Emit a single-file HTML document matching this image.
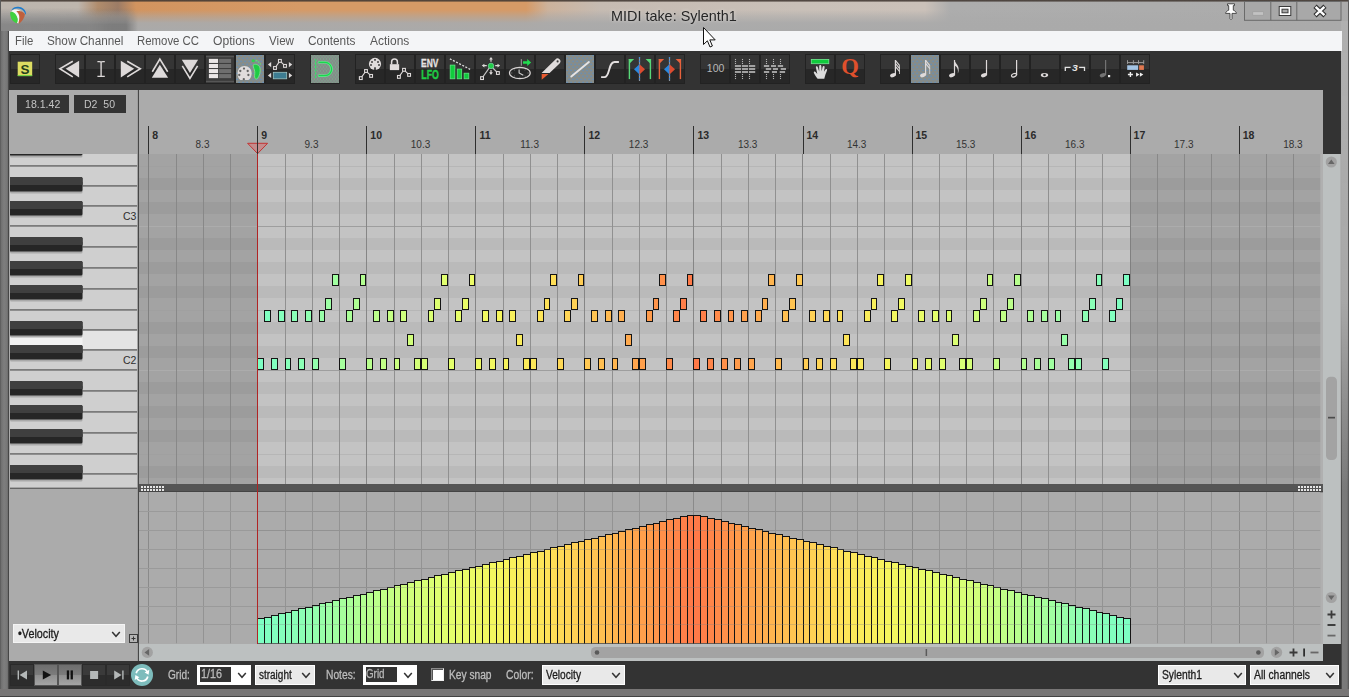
<!DOCTYPE html>
<html><head><meta charset="utf-8"><title>MIDI take: Sylenth1</title>
<style>
html,body{margin:0;padding:0;overflow:hidden;}
body{width:1349px;height:697px;overflow:hidden;background:#6f6f6f;font-family:"Liberation Sans",sans-serif;position:relative;}

.t{position:absolute;white-space:pre;transform-origin:0 0;line-height:1;}
.b{-webkit-text-stroke:.3px;}
#title{position:absolute;left:0;top:0;width:1349px;height:31px;background:
 linear-gradient(to bottom, rgba(66,56,50,.88) 0, rgba(66,56,50,.88) 1px, rgba(66,56,50,0) 2.2px),
 linear-gradient(to bottom, rgba(170,170,170,0) 0, rgba(170,170,170,0) 32%, rgba(170,170,170,.5) 52%, rgba(170,170,170,.95) 74%, rgba(170,170,170,1) 100%),
 linear-gradient(to right, #bcb5ae 0, #beb6ae 78px, #b08c6c 98px, #9c7c66 118px, #d2945f 136px, #d69a66 300px, #d69a66 526px, #ccb29c 548px, #c6bbb2 600px, #c9c0b8 800px, #cbc1b9 925px, #adadad 950px, #ababab 100%);}
#tl-dark{position:absolute;left:0;top:0;width:140px;height:31px;background:linear-gradient(to bottom, rgba(120,120,120,0) 0, rgba(120,120,120,0) 25%, rgba(122,122,122,.95) 80%);
 -webkit-mask-image:linear-gradient(to right,rgba(0,0,0,.75) 0,rgba(0,0,0,.8) 90px,#000 112px,#000 126px,transparent 138px);mask-image:linear-gradient(to right,rgba(0,0,0,.75) 0,rgba(0,0,0,.8) 90px,#000 112px,#000 126px,transparent 138px);}
#frameL{position:absolute;left:0;top:30.5px;width:9.2px;height:667px;background:linear-gradient(to right,#555 0,#707070 1.2px,#7e7e7e 4px,#767676 7.4px,#484848 8.2px,#444 9.2px);}
#frameR{position:absolute;left:1341px;top:20.5px;width:8px;height:676.5px;background:linear-gradient(to bottom,rgba(176,176,176,1) 0,rgba(170,170,170,.95) 280px,rgba(130,130,130,0) 470px),linear-gradient(to right,#4a4a4a 0,#4a4a4a .8px,#7a7a7a 1.4px,#787878 6.4px,#444 7px,#3c3c3c 8px);}
#frameR2{position:absolute;left:1347.6px;top:0;width:1.4px;height:697px;background:#5c5c5c;}
#titleL{position:absolute;left:0;top:0;width:1.3px;height:31px;background:#5a5a5a;}
#frameB{position:absolute;left:0;top:688.5px;width:1349px;height:8.5px;background:linear-gradient(to bottom,#787676 0,#787676 6.8px,#444 7.4px,#3c3c3c 8.5px);}
#menu{position:absolute;left:8.5px;top:30.5px;width:1333px;height:20.5px;background:#f4f5f7;}
#tb{position:absolute;left:9px;top:51px;width:1332px;height:39px;background:#333;}
.info{position:absolute;top:95px;width:52px;height:18px;background:#333;}
#bot{position:absolute;left:9px;top:661px;width:1332px;height:27.5px;background:#333;}
.combo{position:absolute;box-sizing:border-box;height:20.5px;top:664.5px;background:#e9e9e9;border:1px solid #fff;}
.sel{position:absolute;background:#333;}
.tbtn{position:absolute;top:664px;width:24px;height:22px;box-sizing:border-box;border:1px solid #2a2a2a;background:linear-gradient(to bottom,#3a3a3a 0,#3a3a3a 50%,#2c2c2c 50%);}
.tbtn.on{background:linear-gradient(to bottom,#6e6e6e 0,#7c7c7c 50%,#8e8e8e 50%,#a4a4a4 100%);border-color:#555;}

</style></head><body>

<svg width="1349" height="697" viewBox="0 0 1349 697" style="position:absolute;left:0;top:0" font-family="Liberation Sans, sans-serif">
<rect x="9" y="89.7" width="1332" height="571.3" fill="#ababab"/>
<clipPath id="gc"><rect x="139" y="154" width="1181.5" height="330"/></clipPath>
<g clip-path="url(#gc)">
<rect x="139" y="154" width="1181.5" height="330" fill="#a3a3a3"/>
<rect x="257" y="154" width="873" height="330" fill="#c3c3c3"/>
<rect x="139" y="466" width="1181.5" height="12" fill="#9c9c9c"/>
<rect x="257" y="466" width="873" height="12" fill="#bababa"/>
<rect x="139" y="454" width="1181.5" height="1" fill="#9e9e9e" opacity=".6"/>
<rect x="257" y="454" width="873" height="1" fill="#bcbcbc" opacity=".6"/>
<rect x="139" y="430" width="1181.5" height="12" fill="#9c9c9c"/>
<rect x="257" y="430" width="873" height="12" fill="#bababa"/>
<rect x="139" y="406" width="1181.5" height="12" fill="#9c9c9c"/>
<rect x="257" y="406" width="873" height="12" fill="#bababa"/>
<rect x="139" y="382" width="1181.5" height="12" fill="#9c9c9c"/>
<rect x="257" y="382" width="873" height="12" fill="#bababa"/>
<rect x="139" y="370" width="1181.5" height="1" fill="#acacac"/>
<rect x="257" y="370" width="873" height="1" fill="#9e9e9e"/>
<rect x="139" y="346" width="1181.5" height="12" fill="#9c9c9c"/>
<rect x="257" y="346" width="873" height="12" fill="#bababa"/>
<rect x="139" y="322" width="1181.5" height="12" fill="#9c9c9c"/>
<rect x="257" y="322" width="873" height="12" fill="#bababa"/>
<rect x="139" y="310" width="1181.5" height="1" fill="#9e9e9e" opacity=".6"/>
<rect x="257" y="310" width="873" height="1" fill="#bcbcbc" opacity=".6"/>
<rect x="139" y="286" width="1181.5" height="12" fill="#9c9c9c"/>
<rect x="257" y="286" width="873" height="12" fill="#bababa"/>
<rect x="139" y="262" width="1181.5" height="12" fill="#9c9c9c"/>
<rect x="257" y="262" width="873" height="12" fill="#bababa"/>
<rect x="139" y="238" width="1181.5" height="12" fill="#9c9c9c"/>
<rect x="257" y="238" width="873" height="12" fill="#bababa"/>
<rect x="139" y="226" width="1181.5" height="1" fill="#acacac"/>
<rect x="257" y="226" width="873" height="1" fill="#9e9e9e"/>
<rect x="139" y="202" width="1181.5" height="12" fill="#9c9c9c"/>
<rect x="257" y="202" width="873" height="12" fill="#bababa"/>
<rect x="139" y="178" width="1181.5" height="12" fill="#9c9c9c"/>
<rect x="257" y="178" width="873" height="12" fill="#bababa"/>
<rect x="139" y="166" width="1181.5" height="1" fill="#9e9e9e" opacity=".6"/>
<rect x="257" y="166" width="873" height="1" fill="#bcbcbc" opacity=".6"/>
<rect x="139" y="142" width="1181.5" height="12" fill="#9c9c9c"/>
<rect x="257" y="142" width="873" height="12" fill="#bababa"/>
<rect x="148" y="154" width="1" height="330" fill="#808080"/>
<rect x="176" y="154" width="1" height="330" fill="#888888"/>
<rect x="203" y="154" width="1" height="330" fill="#888888"/>
<rect x="230" y="154" width="1" height="330" fill="#888888"/>
<rect x="257" y="154" width="1" height="330" fill="#868686"/>
<rect x="285" y="154" width="1" height="330" fill="#909090"/>
<rect x="312" y="154" width="1" height="330" fill="#909090"/>
<rect x="339" y="154" width="1" height="330" fill="#909090"/>
<rect x="366" y="154" width="1" height="330" fill="#868686"/>
<rect x="394" y="154" width="1" height="330" fill="#909090"/>
<rect x="421" y="154" width="1" height="330" fill="#909090"/>
<rect x="448" y="154" width="1" height="330" fill="#909090"/>
<rect x="475" y="154" width="1" height="330" fill="#868686"/>
<rect x="503" y="154" width="1" height="330" fill="#909090"/>
<rect x="530" y="154" width="1" height="330" fill="#909090"/>
<rect x="557" y="154" width="1" height="330" fill="#909090"/>
<rect x="584" y="154" width="1" height="330" fill="#868686"/>
<rect x="612" y="154" width="1" height="330" fill="#909090"/>
<rect x="639" y="154" width="1" height="330" fill="#909090"/>
<rect x="666" y="154" width="1" height="330" fill="#909090"/>
<rect x="693" y="154" width="1" height="330" fill="#868686"/>
<rect x="721" y="154" width="1" height="330" fill="#909090"/>
<rect x="748" y="154" width="1" height="330" fill="#909090"/>
<rect x="775" y="154" width="1" height="330" fill="#909090"/>
<rect x="802" y="154" width="1" height="330" fill="#868686"/>
<rect x="830" y="154" width="1" height="330" fill="#909090"/>
<rect x="857" y="154" width="1" height="330" fill="#909090"/>
<rect x="884" y="154" width="1" height="330" fill="#909090"/>
<rect x="912" y="154" width="1" height="330" fill="#868686"/>
<rect x="939" y="154" width="1" height="330" fill="#909090"/>
<rect x="966" y="154" width="1" height="330" fill="#909090"/>
<rect x="993" y="154" width="1" height="330" fill="#909090"/>
<rect x="1021" y="154" width="1" height="330" fill="#868686"/>
<rect x="1048" y="154" width="1" height="330" fill="#909090"/>
<rect x="1075" y="154" width="1" height="330" fill="#909090"/>
<rect x="1102" y="154" width="1" height="330" fill="#909090"/>
<rect x="1130" y="154" width="1" height="330" fill="#808080"/>
<rect x="1157" y="154" width="1" height="330" fill="#888888"/>
<rect x="1184" y="154" width="1" height="330" fill="#888888"/>
<rect x="1211" y="154" width="1" height="330" fill="#888888"/>
<rect x="1239" y="154" width="1" height="330" fill="#808080"/>
<rect x="1266" y="154" width="1" height="330" fill="#888888"/>
<rect x="1293" y="154" width="1" height="330" fill="#888888"/>
</g>
<rect x="1320.5" y="154" width="2.5" height="490" fill="#b0b0b0"/>
<rect x="257.5" y="358.5" width="6" height="11" fill="#7dffc4" stroke="#141414" stroke-width="1"/>
<rect x="264.5" y="310.5" width="6" height="11" fill="#80ffc1" stroke="#141414" stroke-width="1"/>
<rect x="271.5" y="358.5" width="6" height="11" fill="#82ffbf" stroke="#141414" stroke-width="1"/>
<rect x="278.5" y="310.5" width="6" height="11" fill="#85ffbc" stroke="#141414" stroke-width="1"/>
<rect x="285.5" y="358.5" width="5" height="11" fill="#87ffba" stroke="#141414" stroke-width="1"/>
<rect x="291.5" y="310.5" width="6" height="11" fill="#8affb7" stroke="#141414" stroke-width="1"/>
<rect x="298.5" y="358.5" width="6" height="11" fill="#8cffb5" stroke="#141414" stroke-width="1"/>
<rect x="305.5" y="310.5" width="6" height="11" fill="#8fffb2" stroke="#141414" stroke-width="1"/>
<rect x="312.5" y="358.5" width="6" height="11" fill="#94ffae" stroke="#141414" stroke-width="1"/>
<rect x="319.5" y="310.5" width="5" height="11" fill="#98ffa9" stroke="#141414" stroke-width="1"/>
<rect x="325.5" y="298.5" width="6" height="11" fill="#9dffa5" stroke="#141414" stroke-width="1"/>
<rect x="332.5" y="274.5" width="6" height="11" fill="#a1ffa1" stroke="#141414" stroke-width="1"/>
<rect x="339.5" y="358.5" width="6" height="11" fill="#a6ff9d" stroke="#141414" stroke-width="1"/>
<rect x="346.5" y="310.5" width="6" height="11" fill="#aaff98" stroke="#141414" stroke-width="1"/>
<rect x="353.5" y="298.5" width="6" height="11" fill="#afff94" stroke="#141414" stroke-width="1"/>
<rect x="360.5" y="274.5" width="5" height="11" fill="#b3ff91" stroke="#141414" stroke-width="1"/>
<rect x="366.5" y="358.5" width="6" height="11" fill="#b8ff8e" stroke="#141414" stroke-width="1"/>
<rect x="373.5" y="310.5" width="6" height="11" fill="#bcff8b" stroke="#141414" stroke-width="1"/>
<rect x="380.5" y="358.5" width="6" height="11" fill="#c1ff87" stroke="#141414" stroke-width="1"/>
<rect x="387.5" y="310.5" width="6" height="11" fill="#c5ff84" stroke="#141414" stroke-width="1"/>
<rect x="394.5" y="358.5" width="5" height="11" fill="#caff81" stroke="#141414" stroke-width="1"/>
<rect x="400.5" y="310.5" width="6" height="11" fill="#ceff7e" stroke="#141414" stroke-width="1"/>
<rect x="407.5" y="334.5" width="6" height="11" fill="#d1ff7b" stroke="#141414" stroke-width="1"/>
<rect x="414.5" y="358.5" width="6" height="11" fill="#d4ff79" stroke="#141414" stroke-width="1"/>
<rect x="421.5" y="358.5" width="6" height="11" fill="#d7ff76" stroke="#141414" stroke-width="1"/>
<rect x="428.5" y="310.5" width="5" height="11" fill="#dbff74" stroke="#141414" stroke-width="1"/>
<rect x="434.5" y="298.5" width="6" height="11" fill="#deff71" stroke="#141414" stroke-width="1"/>
<rect x="441.5" y="274.5" width="6" height="11" fill="#e1ff6f" stroke="#141414" stroke-width="1"/>
<rect x="448.5" y="358.5" width="6" height="11" fill="#e4ff6c" stroke="#141414" stroke-width="1"/>
<rect x="455.5" y="310.5" width="6" height="11" fill="#e7fe6a" stroke="#141414" stroke-width="1"/>
<rect x="462.5" y="298.5" width="6" height="11" fill="#e9fc68" stroke="#141414" stroke-width="1"/>
<rect x="469.5" y="274.5" width="5" height="11" fill="#ecfb66" stroke="#141414" stroke-width="1"/>
<rect x="475.5" y="358.5" width="6" height="11" fill="#eefa64" stroke="#141414" stroke-width="1"/>
<rect x="482.5" y="310.5" width="6" height="11" fill="#f1f962" stroke="#141414" stroke-width="1"/>
<rect x="489.5" y="358.5" width="6" height="11" fill="#f3f760" stroke="#141414" stroke-width="1"/>
<rect x="496.5" y="310.5" width="6" height="11" fill="#f6f65e" stroke="#141414" stroke-width="1"/>
<rect x="503.5" y="358.5" width="5" height="11" fill="#f7f35d" stroke="#141414" stroke-width="1"/>
<rect x="509.5" y="310.5" width="6" height="11" fill="#f9f05c" stroke="#141414" stroke-width="1"/>
<rect x="516.5" y="334.5" width="6" height="11" fill="#faed5b" stroke="#141414" stroke-width="1"/>
<rect x="523.5" y="358.5" width="6" height="11" fill="#fbeb5b" stroke="#141414" stroke-width="1"/>
<rect x="530.5" y="358.5" width="6" height="11" fill="#fce85a" stroke="#141414" stroke-width="1"/>
<rect x="537.5" y="310.5" width="6" height="11" fill="#fee559" stroke="#141414" stroke-width="1"/>
<rect x="544.5" y="298.5" width="5" height="11" fill="#ffe258" stroke="#141414" stroke-width="1"/>
<rect x="550.5" y="274.5" width="6" height="11" fill="#ffde57" stroke="#141414" stroke-width="1"/>
<rect x="557.5" y="358.5" width="6" height="11" fill="#ffd956" stroke="#141414" stroke-width="1"/>
<rect x="564.5" y="310.5" width="6" height="11" fill="#ffd555" stroke="#141414" stroke-width="1"/>
<rect x="571.5" y="298.5" width="6" height="11" fill="#ffd155" stroke="#141414" stroke-width="1"/>
<rect x="578.5" y="274.5" width="5" height="11" fill="#ffcd54" stroke="#141414" stroke-width="1"/>
<rect x="584.5" y="358.5" width="6" height="11" fill="#ffc853" stroke="#141414" stroke-width="1"/>
<rect x="591.5" y="310.5" width="6" height="11" fill="#ffc452" stroke="#141414" stroke-width="1"/>
<rect x="598.5" y="358.5" width="6" height="11" fill="#ffbf51" stroke="#141414" stroke-width="1"/>
<rect x="605.5" y="310.5" width="6" height="11" fill="#ffba50" stroke="#141414" stroke-width="1"/>
<rect x="612.5" y="358.5" width="5" height="11" fill="#ffb54f" stroke="#141414" stroke-width="1"/>
<rect x="618.5" y="310.5" width="6" height="11" fill="#ffaf4f" stroke="#141414" stroke-width="1"/>
<rect x="625.5" y="334.5" width="6" height="11" fill="#ffaa4e" stroke="#141414" stroke-width="1"/>
<rect x="632.5" y="358.5" width="6" height="11" fill="#ffa54d" stroke="#141414" stroke-width="1"/>
<rect x="639.5" y="358.5" width="6" height="11" fill="#ffa04c" stroke="#141414" stroke-width="1"/>
<rect x="646.5" y="310.5" width="6" height="11" fill="#ff9b4b" stroke="#141414" stroke-width="1"/>
<rect x="653.5" y="298.5" width="5" height="11" fill="#ff954b" stroke="#141414" stroke-width="1"/>
<rect x="659.5" y="274.5" width="6" height="11" fill="#ff904a" stroke="#141414" stroke-width="1"/>
<rect x="666.5" y="358.5" width="6" height="11" fill="#ff8a4a" stroke="#141414" stroke-width="1"/>
<rect x="673.5" y="310.5" width="6" height="11" fill="#ff8549" stroke="#141414" stroke-width="1"/>
<rect x="680.5" y="298.5" width="6" height="11" fill="#ff7f49" stroke="#141414" stroke-width="1"/>
<rect x="687.5" y="274.5" width="5" height="11" fill="#ff7a48" stroke="#141414" stroke-width="1"/>
<rect x="693.5" y="358.5" width="6" height="11" fill="#ff7a48" stroke="#141414" stroke-width="1"/>
<rect x="700.5" y="310.5" width="6" height="11" fill="#ff7f49" stroke="#141414" stroke-width="1"/>
<rect x="707.5" y="358.5" width="6" height="11" fill="#ff8549" stroke="#141414" stroke-width="1"/>
<rect x="714.5" y="310.5" width="6" height="11" fill="#ff8a4a" stroke="#141414" stroke-width="1"/>
<rect x="721.5" y="358.5" width="6" height="11" fill="#ff904a" stroke="#141414" stroke-width="1"/>
<rect x="728.5" y="310.5" width="5" height="11" fill="#ff954b" stroke="#141414" stroke-width="1"/>
<rect x="734.5" y="358.5" width="6" height="11" fill="#ff9b4b" stroke="#141414" stroke-width="1"/>
<rect x="741.5" y="310.5" width="6" height="11" fill="#ffa04c" stroke="#141414" stroke-width="1"/>
<rect x="748.5" y="358.5" width="6" height="11" fill="#ffa54d" stroke="#141414" stroke-width="1"/>
<rect x="755.5" y="310.5" width="6" height="11" fill="#ffaa4e" stroke="#141414" stroke-width="1"/>
<rect x="762.5" y="298.5" width="5" height="11" fill="#ffaf4f" stroke="#141414" stroke-width="1"/>
<rect x="768.5" y="274.5" width="6" height="11" fill="#ffb54f" stroke="#141414" stroke-width="1"/>
<rect x="775.5" y="358.5" width="6" height="11" fill="#ffba50" stroke="#141414" stroke-width="1"/>
<rect x="782.5" y="310.5" width="6" height="11" fill="#ffbf51" stroke="#141414" stroke-width="1"/>
<rect x="789.5" y="298.5" width="6" height="11" fill="#ffc452" stroke="#141414" stroke-width="1"/>
<rect x="796.5" y="274.5" width="6" height="11" fill="#ffc853" stroke="#141414" stroke-width="1"/>
<rect x="803.5" y="358.5" width="5" height="11" fill="#ffcd54" stroke="#141414" stroke-width="1"/>
<rect x="809.5" y="310.5" width="6" height="11" fill="#ffd155" stroke="#141414" stroke-width="1"/>
<rect x="816.5" y="358.5" width="6" height="11" fill="#ffd555" stroke="#141414" stroke-width="1"/>
<rect x="823.5" y="310.5" width="6" height="11" fill="#ffd956" stroke="#141414" stroke-width="1"/>
<rect x="830.5" y="358.5" width="6" height="11" fill="#ffde57" stroke="#141414" stroke-width="1"/>
<rect x="837.5" y="310.5" width="5" height="11" fill="#ffe258" stroke="#141414" stroke-width="1"/>
<rect x="843.5" y="334.5" width="6" height="11" fill="#fee559" stroke="#141414" stroke-width="1"/>
<rect x="850.5" y="358.5" width="6" height="11" fill="#fce85a" stroke="#141414" stroke-width="1"/>
<rect x="857.5" y="358.5" width="6" height="11" fill="#fbeb5b" stroke="#141414" stroke-width="1"/>
<rect x="864.5" y="310.5" width="6" height="11" fill="#faed5b" stroke="#141414" stroke-width="1"/>
<rect x="871.5" y="298.5" width="5" height="11" fill="#f9f05c" stroke="#141414" stroke-width="1"/>
<rect x="877.5" y="274.5" width="6" height="11" fill="#f7f35d" stroke="#141414" stroke-width="1"/>
<rect x="884.5" y="358.5" width="6" height="11" fill="#f6f65e" stroke="#141414" stroke-width="1"/>
<rect x="891.5" y="310.5" width="6" height="11" fill="#f3f760" stroke="#141414" stroke-width="1"/>
<rect x="898.5" y="298.5" width="6" height="11" fill="#f1f962" stroke="#141414" stroke-width="1"/>
<rect x="905.5" y="274.5" width="6" height="11" fill="#eefa64" stroke="#141414" stroke-width="1"/>
<rect x="912.5" y="358.5" width="5" height="11" fill="#ecfb66" stroke="#141414" stroke-width="1"/>
<rect x="918.5" y="310.5" width="6" height="11" fill="#e9fc68" stroke="#141414" stroke-width="1"/>
<rect x="925.5" y="358.5" width="6" height="11" fill="#e7fe6a" stroke="#141414" stroke-width="1"/>
<rect x="932.5" y="310.5" width="6" height="11" fill="#e4ff6c" stroke="#141414" stroke-width="1"/>
<rect x="939.5" y="358.5" width="6" height="11" fill="#e1ff6f" stroke="#141414" stroke-width="1"/>
<rect x="946.5" y="310.5" width="5" height="11" fill="#deff71" stroke="#141414" stroke-width="1"/>
<rect x="952.5" y="334.5" width="6" height="11" fill="#dbff74" stroke="#141414" stroke-width="1"/>
<rect x="959.5" y="358.5" width="6" height="11" fill="#d7ff76" stroke="#141414" stroke-width="1"/>
<rect x="966.5" y="358.5" width="6" height="11" fill="#d4ff79" stroke="#141414" stroke-width="1"/>
<rect x="973.5" y="310.5" width="6" height="11" fill="#d1ff7b" stroke="#141414" stroke-width="1"/>
<rect x="980.5" y="298.5" width="6" height="11" fill="#ceff7e" stroke="#141414" stroke-width="1"/>
<rect x="987.5" y="274.5" width="5" height="11" fill="#caff81" stroke="#141414" stroke-width="1"/>
<rect x="993.5" y="358.5" width="6" height="11" fill="#c5ff84" stroke="#141414" stroke-width="1"/>
<rect x="1000.5" y="310.5" width="6" height="11" fill="#c1ff87" stroke="#141414" stroke-width="1"/>
<rect x="1007.5" y="298.5" width="6" height="11" fill="#bcff8b" stroke="#141414" stroke-width="1"/>
<rect x="1014.5" y="274.5" width="6" height="11" fill="#b8ff8e" stroke="#141414" stroke-width="1"/>
<rect x="1021.5" y="358.5" width="5" height="11" fill="#b3ff91" stroke="#141414" stroke-width="1"/>
<rect x="1027.5" y="310.5" width="6" height="11" fill="#afff94" stroke="#141414" stroke-width="1"/>
<rect x="1034.5" y="358.5" width="6" height="11" fill="#aaff98" stroke="#141414" stroke-width="1"/>
<rect x="1041.5" y="310.5" width="6" height="11" fill="#a6ff9d" stroke="#141414" stroke-width="1"/>
<rect x="1048.5" y="358.5" width="6" height="11" fill="#a1ffa1" stroke="#141414" stroke-width="1"/>
<rect x="1055.5" y="310.5" width="5" height="11" fill="#9dffa5" stroke="#141414" stroke-width="1"/>
<rect x="1061.5" y="334.5" width="6" height="11" fill="#98ffa9" stroke="#141414" stroke-width="1"/>
<rect x="1068.5" y="358.5" width="6" height="11" fill="#94ffae" stroke="#141414" stroke-width="1"/>
<rect x="1075.5" y="358.5" width="6" height="11" fill="#8fffb2" stroke="#141414" stroke-width="1"/>
<rect x="1082.5" y="310.5" width="6" height="11" fill="#8cffb5" stroke="#141414" stroke-width="1"/>
<rect x="1089.5" y="298.5" width="6" height="11" fill="#8affb7" stroke="#141414" stroke-width="1"/>
<rect x="1096.5" y="274.5" width="5" height="11" fill="#87ffba" stroke="#141414" stroke-width="1"/>
<rect x="1102.5" y="358.5" width="6" height="11" fill="#85ffbc" stroke="#141414" stroke-width="1"/>
<rect x="1109.5" y="310.5" width="6" height="11" fill="#82ffbf" stroke="#141414" stroke-width="1"/>
<rect x="1116.5" y="298.5" width="6" height="11" fill="#80ffc1" stroke="#141414" stroke-width="1"/>
<rect x="1123.5" y="274.5" width="6" height="11" fill="#7dffc4" stroke="#141414" stroke-width="1"/>
<rect x="139" y="484" width="1184" height="8" fill="#555555"/>
<rect x="139" y="491.3" width="1184" height="1" fill="#3e3e3e"/>
<rect x="141" y="486" width="2" height="2" fill="#e6e6e6"/>
<rect x="141" y="489" width="2" height="2" fill="#e6e6e6"/>
<rect x="144" y="486" width="2" height="2" fill="#e6e6e6"/>
<rect x="144" y="489" width="2" height="2" fill="#e6e6e6"/>
<rect x="147" y="486" width="2" height="2" fill="#e6e6e6"/>
<rect x="147" y="489" width="2" height="2" fill="#e6e6e6"/>
<rect x="150" y="486" width="2" height="2" fill="#e6e6e6"/>
<rect x="150" y="489" width="2" height="2" fill="#e6e6e6"/>
<rect x="153" y="486" width="2" height="2" fill="#e6e6e6"/>
<rect x="153" y="489" width="2" height="2" fill="#e6e6e6"/>
<rect x="156" y="486" width="2" height="2" fill="#e6e6e6"/>
<rect x="156" y="489" width="2" height="2" fill="#e6e6e6"/>
<rect x="159" y="486" width="2" height="2" fill="#e6e6e6"/>
<rect x="159" y="489" width="2" height="2" fill="#e6e6e6"/>
<rect x="162" y="486" width="2" height="2" fill="#e6e6e6"/>
<rect x="162" y="489" width="2" height="2" fill="#e6e6e6"/>
<rect x="1298" y="486" width="2" height="2" fill="#e6e6e6"/>
<rect x="1298" y="489" width="2" height="2" fill="#e6e6e6"/>
<rect x="1301" y="486" width="2" height="2" fill="#e6e6e6"/>
<rect x="1301" y="489" width="2" height="2" fill="#e6e6e6"/>
<rect x="1304" y="486" width="2" height="2" fill="#e6e6e6"/>
<rect x="1304" y="489" width="2" height="2" fill="#e6e6e6"/>
<rect x="1307" y="486" width="2" height="2" fill="#e6e6e6"/>
<rect x="1307" y="489" width="2" height="2" fill="#e6e6e6"/>
<rect x="1310" y="486" width="2" height="2" fill="#e6e6e6"/>
<rect x="1310" y="489" width="2" height="2" fill="#e6e6e6"/>
<rect x="1313" y="486" width="2" height="2" fill="#e6e6e6"/>
<rect x="1313" y="489" width="2" height="2" fill="#e6e6e6"/>
<rect x="1316" y="486" width="2" height="2" fill="#e6e6e6"/>
<rect x="1316" y="489" width="2" height="2" fill="#e6e6e6"/>
<rect x="1319" y="486" width="2" height="2" fill="#e6e6e6"/>
<rect x="1319" y="489" width="2" height="2" fill="#e6e6e6"/>
<clipPath id="vc"><rect x="139" y="492" width="1181.5" height="151.5"/></clipPath>
<g clip-path="url(#vc)">
<rect x="139" y="492" width="1181.5" height="151.5" fill="#ababab"/>
<rect x="148" y="492" width="1" height="151.5" fill="#8a8a8a"/>
<rect x="176" y="492" width="1" height="151.5" fill="#939393"/>
<rect x="203" y="492" width="1" height="151.5" fill="#939393"/>
<rect x="230" y="492" width="1" height="151.5" fill="#939393"/>
<rect x="257" y="492" width="1" height="151.5" fill="#8a8a8a"/>
<rect x="285" y="492" width="1" height="151.5" fill="#939393"/>
<rect x="312" y="492" width="1" height="151.5" fill="#939393"/>
<rect x="339" y="492" width="1" height="151.5" fill="#939393"/>
<rect x="366" y="492" width="1" height="151.5" fill="#8a8a8a"/>
<rect x="394" y="492" width="1" height="151.5" fill="#939393"/>
<rect x="421" y="492" width="1" height="151.5" fill="#939393"/>
<rect x="448" y="492" width="1" height="151.5" fill="#939393"/>
<rect x="475" y="492" width="1" height="151.5" fill="#8a8a8a"/>
<rect x="503" y="492" width="1" height="151.5" fill="#939393"/>
<rect x="530" y="492" width="1" height="151.5" fill="#939393"/>
<rect x="557" y="492" width="1" height="151.5" fill="#939393"/>
<rect x="584" y="492" width="1" height="151.5" fill="#8a8a8a"/>
<rect x="612" y="492" width="1" height="151.5" fill="#939393"/>
<rect x="639" y="492" width="1" height="151.5" fill="#939393"/>
<rect x="666" y="492" width="1" height="151.5" fill="#939393"/>
<rect x="693" y="492" width="1" height="151.5" fill="#8a8a8a"/>
<rect x="721" y="492" width="1" height="151.5" fill="#939393"/>
<rect x="748" y="492" width="1" height="151.5" fill="#939393"/>
<rect x="775" y="492" width="1" height="151.5" fill="#939393"/>
<rect x="802" y="492" width="1" height="151.5" fill="#8a8a8a"/>
<rect x="830" y="492" width="1" height="151.5" fill="#939393"/>
<rect x="857" y="492" width="1" height="151.5" fill="#939393"/>
<rect x="884" y="492" width="1" height="151.5" fill="#939393"/>
<rect x="912" y="492" width="1" height="151.5" fill="#8a8a8a"/>
<rect x="939" y="492" width="1" height="151.5" fill="#939393"/>
<rect x="966" y="492" width="1" height="151.5" fill="#939393"/>
<rect x="993" y="492" width="1" height="151.5" fill="#939393"/>
<rect x="1021" y="492" width="1" height="151.5" fill="#8a8a8a"/>
<rect x="1048" y="492" width="1" height="151.5" fill="#939393"/>
<rect x="1075" y="492" width="1" height="151.5" fill="#939393"/>
<rect x="1102" y="492" width="1" height="151.5" fill="#939393"/>
<rect x="1130" y="492" width="1" height="151.5" fill="#8a8a8a"/>
<rect x="1157" y="492" width="1" height="151.5" fill="#939393"/>
<rect x="1184" y="492" width="1" height="151.5" fill="#939393"/>
<rect x="1211" y="492" width="1" height="151.5" fill="#939393"/>
<rect x="1239" y="492" width="1" height="151.5" fill="#8a8a8a"/>
<rect x="1266" y="492" width="1" height="151.5" fill="#939393"/>
<rect x="1293" y="492" width="1" height="151.5" fill="#939393"/>
<rect x="139" y="624" width="1181.5" height="1" fill="#9a9a9a"/>
<rect x="139" y="606" width="1181.5" height="1" fill="#9a9a9a"/>
<rect x="139" y="587" width="1181.5" height="1" fill="#9a9a9a"/>
<rect x="139" y="568" width="1181.5" height="1" fill="#9a9a9a"/>
<rect x="139" y="549" width="1181.5" height="1" fill="#9a9a9a"/>
<rect x="139" y="530" width="1181.5" height="1" fill="#9a9a9a"/>
<rect x="139" y="511" width="1181.5" height="1" fill="#9a9a9a"/>
<rect x="257.5" y="618.5" width="7" height="25" fill="#7dffc4" stroke="#141414" stroke-width="1"/>
<rect x="264.5" y="617.5" width="7" height="26" fill="#80ffc1" stroke="#141414" stroke-width="1"/>
<rect x="271.5" y="615.5" width="7" height="28" fill="#82ffbf" stroke="#141414" stroke-width="1"/>
<rect x="278.5" y="613.5" width="7" height="30" fill="#85ffbc" stroke="#141414" stroke-width="1"/>
<rect x="285.5" y="612.5" width="6" height="31" fill="#87ffba" stroke="#141414" stroke-width="1"/>
<rect x="291.5" y="610.5" width="7" height="33" fill="#8affb7" stroke="#141414" stroke-width="1"/>
<rect x="298.5" y="608.5" width="7" height="35" fill="#8cffb5" stroke="#141414" stroke-width="1"/>
<rect x="305.5" y="607.5" width="7" height="36" fill="#8fffb2" stroke="#141414" stroke-width="1"/>
<rect x="312.5" y="605.5" width="7" height="38" fill="#94ffae" stroke="#141414" stroke-width="1"/>
<rect x="319.5" y="603.5" width="6" height="40" fill="#98ffa9" stroke="#141414" stroke-width="1"/>
<rect x="325.5" y="602.5" width="7" height="41" fill="#9dffa5" stroke="#141414" stroke-width="1"/>
<rect x="332.5" y="600.5" width="7" height="43" fill="#a1ffa1" stroke="#141414" stroke-width="1"/>
<rect x="339.5" y="598.5" width="7" height="45" fill="#a6ff9d" stroke="#141414" stroke-width="1"/>
<rect x="346.5" y="597.5" width="7" height="46" fill="#aaff98" stroke="#141414" stroke-width="1"/>
<rect x="353.5" y="595.5" width="7" height="48" fill="#afff94" stroke="#141414" stroke-width="1"/>
<rect x="360.5" y="594.5" width="6" height="49" fill="#b3ff91" stroke="#141414" stroke-width="1"/>
<rect x="366.5" y="592.5" width="7" height="51" fill="#b8ff8e" stroke="#141414" stroke-width="1"/>
<rect x="373.5" y="590.5" width="7" height="53" fill="#bcff8b" stroke="#141414" stroke-width="1"/>
<rect x="380.5" y="589.5" width="7" height="54" fill="#c1ff87" stroke="#141414" stroke-width="1"/>
<rect x="387.5" y="587.5" width="7" height="56" fill="#c5ff84" stroke="#141414" stroke-width="1"/>
<rect x="394.5" y="585.5" width="6" height="58" fill="#caff81" stroke="#141414" stroke-width="1"/>
<rect x="400.5" y="584.5" width="7" height="59" fill="#ceff7e" stroke="#141414" stroke-width="1"/>
<rect x="407.5" y="582.5" width="7" height="61" fill="#d1ff7b" stroke="#141414" stroke-width="1"/>
<rect x="414.5" y="580.5" width="7" height="63" fill="#d4ff79" stroke="#141414" stroke-width="1"/>
<rect x="421.5" y="579.5" width="7" height="64" fill="#d7ff76" stroke="#141414" stroke-width="1"/>
<rect x="428.5" y="577.5" width="6" height="66" fill="#dbff74" stroke="#141414" stroke-width="1"/>
<rect x="434.5" y="575.5" width="7" height="68" fill="#deff71" stroke="#141414" stroke-width="1"/>
<rect x="441.5" y="574.5" width="7" height="69" fill="#e1ff6f" stroke="#141414" stroke-width="1"/>
<rect x="448.5" y="572.5" width="7" height="71" fill="#e4ff6c" stroke="#141414" stroke-width="1"/>
<rect x="455.5" y="570.5" width="7" height="73" fill="#e7fe6a" stroke="#141414" stroke-width="1"/>
<rect x="462.5" y="569.5" width="7" height="74" fill="#e9fc68" stroke="#141414" stroke-width="1"/>
<rect x="469.5" y="567.5" width="6" height="76" fill="#ecfb66" stroke="#141414" stroke-width="1"/>
<rect x="475.5" y="566.5" width="7" height="77" fill="#eefa64" stroke="#141414" stroke-width="1"/>
<rect x="482.5" y="564.5" width="7" height="79" fill="#f1f962" stroke="#141414" stroke-width="1"/>
<rect x="489.5" y="562.5" width="7" height="81" fill="#f3f760" stroke="#141414" stroke-width="1"/>
<rect x="496.5" y="561.5" width="7" height="82" fill="#f6f65e" stroke="#141414" stroke-width="1"/>
<rect x="503.5" y="559.5" width="6" height="84" fill="#f7f35d" stroke="#141414" stroke-width="1"/>
<rect x="509.5" y="557.5" width="7" height="86" fill="#f9f05c" stroke="#141414" stroke-width="1"/>
<rect x="516.5" y="556.5" width="7" height="87" fill="#faed5b" stroke="#141414" stroke-width="1"/>
<rect x="523.5" y="554.5" width="7" height="89" fill="#fbeb5b" stroke="#141414" stroke-width="1"/>
<rect x="530.5" y="552.5" width="7" height="91" fill="#fce85a" stroke="#141414" stroke-width="1"/>
<rect x="537.5" y="551.5" width="7" height="92" fill="#fee559" stroke="#141414" stroke-width="1"/>
<rect x="544.5" y="549.5" width="6" height="94" fill="#ffe258" stroke="#141414" stroke-width="1"/>
<rect x="550.5" y="547.5" width="7" height="96" fill="#ffde57" stroke="#141414" stroke-width="1"/>
<rect x="557.5" y="546.5" width="7" height="97" fill="#ffd956" stroke="#141414" stroke-width="1"/>
<rect x="564.5" y="544.5" width="7" height="99" fill="#ffd555" stroke="#141414" stroke-width="1"/>
<rect x="571.5" y="542.5" width="7" height="101" fill="#ffd155" stroke="#141414" stroke-width="1"/>
<rect x="578.5" y="541.5" width="6" height="102" fill="#ffcd54" stroke="#141414" stroke-width="1"/>
<rect x="584.5" y="539.5" width="7" height="104" fill="#ffc853" stroke="#141414" stroke-width="1"/>
<rect x="591.5" y="538.5" width="7" height="105" fill="#ffc452" stroke="#141414" stroke-width="1"/>
<rect x="598.5" y="536.5" width="7" height="107" fill="#ffbf51" stroke="#141414" stroke-width="1"/>
<rect x="605.5" y="534.5" width="7" height="109" fill="#ffba50" stroke="#141414" stroke-width="1"/>
<rect x="612.5" y="533.5" width="6" height="110" fill="#ffb54f" stroke="#141414" stroke-width="1"/>
<rect x="618.5" y="531.5" width="7" height="112" fill="#ffaf4f" stroke="#141414" stroke-width="1"/>
<rect x="625.5" y="529.5" width="7" height="114" fill="#ffaa4e" stroke="#141414" stroke-width="1"/>
<rect x="632.5" y="528.5" width="7" height="115" fill="#ffa54d" stroke="#141414" stroke-width="1"/>
<rect x="639.5" y="526.5" width="7" height="117" fill="#ffa04c" stroke="#141414" stroke-width="1"/>
<rect x="646.5" y="524.5" width="7" height="119" fill="#ff9b4b" stroke="#141414" stroke-width="1"/>
<rect x="653.5" y="523.5" width="6" height="120" fill="#ff954b" stroke="#141414" stroke-width="1"/>
<rect x="659.5" y="521.5" width="7" height="122" fill="#ff904a" stroke="#141414" stroke-width="1"/>
<rect x="666.5" y="519.5" width="7" height="124" fill="#ff8a4a" stroke="#141414" stroke-width="1"/>
<rect x="673.5" y="518.5" width="7" height="125" fill="#ff8549" stroke="#141414" stroke-width="1"/>
<rect x="680.5" y="516.5" width="7" height="127" fill="#ff7f49" stroke="#141414" stroke-width="1"/>
<rect x="687.5" y="515.5" width="6" height="128" fill="#ff7a48" stroke="#141414" stroke-width="1"/>
<rect x="693.5" y="515.5" width="7" height="128" fill="#ff7a48" stroke="#141414" stroke-width="1"/>
<rect x="700.5" y="516.5" width="7" height="127" fill="#ff7f49" stroke="#141414" stroke-width="1"/>
<rect x="707.5" y="518.5" width="7" height="125" fill="#ff8549" stroke="#141414" stroke-width="1"/>
<rect x="714.5" y="519.5" width="7" height="124" fill="#ff8a4a" stroke="#141414" stroke-width="1"/>
<rect x="721.5" y="521.5" width="7" height="122" fill="#ff904a" stroke="#141414" stroke-width="1"/>
<rect x="728.5" y="523.5" width="6" height="120" fill="#ff954b" stroke="#141414" stroke-width="1"/>
<rect x="734.5" y="524.5" width="7" height="119" fill="#ff9b4b" stroke="#141414" stroke-width="1"/>
<rect x="741.5" y="526.5" width="7" height="117" fill="#ffa04c" stroke="#141414" stroke-width="1"/>
<rect x="748.5" y="528.5" width="7" height="115" fill="#ffa54d" stroke="#141414" stroke-width="1"/>
<rect x="755.5" y="529.5" width="7" height="114" fill="#ffaa4e" stroke="#141414" stroke-width="1"/>
<rect x="762.5" y="531.5" width="6" height="112" fill="#ffaf4f" stroke="#141414" stroke-width="1"/>
<rect x="768.5" y="533.5" width="7" height="110" fill="#ffb54f" stroke="#141414" stroke-width="1"/>
<rect x="775.5" y="534.5" width="7" height="109" fill="#ffba50" stroke="#141414" stroke-width="1"/>
<rect x="782.5" y="536.5" width="7" height="107" fill="#ffbf51" stroke="#141414" stroke-width="1"/>
<rect x="789.5" y="538.5" width="7" height="105" fill="#ffc452" stroke="#141414" stroke-width="1"/>
<rect x="796.5" y="539.5" width="7" height="104" fill="#ffc853" stroke="#141414" stroke-width="1"/>
<rect x="803.5" y="541.5" width="6" height="102" fill="#ffcd54" stroke="#141414" stroke-width="1"/>
<rect x="809.5" y="542.5" width="7" height="101" fill="#ffd155" stroke="#141414" stroke-width="1"/>
<rect x="816.5" y="544.5" width="7" height="99" fill="#ffd555" stroke="#141414" stroke-width="1"/>
<rect x="823.5" y="546.5" width="7" height="97" fill="#ffd956" stroke="#141414" stroke-width="1"/>
<rect x="830.5" y="547.5" width="7" height="96" fill="#ffde57" stroke="#141414" stroke-width="1"/>
<rect x="837.5" y="549.5" width="6" height="94" fill="#ffe258" stroke="#141414" stroke-width="1"/>
<rect x="843.5" y="551.5" width="7" height="92" fill="#fee559" stroke="#141414" stroke-width="1"/>
<rect x="850.5" y="552.5" width="7" height="91" fill="#fce85a" stroke="#141414" stroke-width="1"/>
<rect x="857.5" y="554.5" width="7" height="89" fill="#fbeb5b" stroke="#141414" stroke-width="1"/>
<rect x="864.5" y="556.5" width="7" height="87" fill="#faed5b" stroke="#141414" stroke-width="1"/>
<rect x="871.5" y="557.5" width="6" height="86" fill="#f9f05c" stroke="#141414" stroke-width="1"/>
<rect x="877.5" y="559.5" width="7" height="84" fill="#f7f35d" stroke="#141414" stroke-width="1"/>
<rect x="884.5" y="561.5" width="7" height="82" fill="#f6f65e" stroke="#141414" stroke-width="1"/>
<rect x="891.5" y="562.5" width="7" height="81" fill="#f3f760" stroke="#141414" stroke-width="1"/>
<rect x="898.5" y="564.5" width="7" height="79" fill="#f1f962" stroke="#141414" stroke-width="1"/>
<rect x="905.5" y="566.5" width="7" height="77" fill="#eefa64" stroke="#141414" stroke-width="1"/>
<rect x="912.5" y="567.5" width="6" height="76" fill="#ecfb66" stroke="#141414" stroke-width="1"/>
<rect x="918.5" y="569.5" width="7" height="74" fill="#e9fc68" stroke="#141414" stroke-width="1"/>
<rect x="925.5" y="570.5" width="7" height="73" fill="#e7fe6a" stroke="#141414" stroke-width="1"/>
<rect x="932.5" y="572.5" width="7" height="71" fill="#e4ff6c" stroke="#141414" stroke-width="1"/>
<rect x="939.5" y="574.5" width="7" height="69" fill="#e1ff6f" stroke="#141414" stroke-width="1"/>
<rect x="946.5" y="575.5" width="6" height="68" fill="#deff71" stroke="#141414" stroke-width="1"/>
<rect x="952.5" y="577.5" width="7" height="66" fill="#dbff74" stroke="#141414" stroke-width="1"/>
<rect x="959.5" y="579.5" width="7" height="64" fill="#d7ff76" stroke="#141414" stroke-width="1"/>
<rect x="966.5" y="580.5" width="7" height="63" fill="#d4ff79" stroke="#141414" stroke-width="1"/>
<rect x="973.5" y="582.5" width="7" height="61" fill="#d1ff7b" stroke="#141414" stroke-width="1"/>
<rect x="980.5" y="584.5" width="7" height="59" fill="#ceff7e" stroke="#141414" stroke-width="1"/>
<rect x="987.5" y="585.5" width="6" height="58" fill="#caff81" stroke="#141414" stroke-width="1"/>
<rect x="993.5" y="587.5" width="7" height="56" fill="#c5ff84" stroke="#141414" stroke-width="1"/>
<rect x="1000.5" y="589.5" width="7" height="54" fill="#c1ff87" stroke="#141414" stroke-width="1"/>
<rect x="1007.5" y="590.5" width="7" height="53" fill="#bcff8b" stroke="#141414" stroke-width="1"/>
<rect x="1014.5" y="592.5" width="7" height="51" fill="#b8ff8e" stroke="#141414" stroke-width="1"/>
<rect x="1021.5" y="594.5" width="6" height="49" fill="#b3ff91" stroke="#141414" stroke-width="1"/>
<rect x="1027.5" y="595.5" width="7" height="48" fill="#afff94" stroke="#141414" stroke-width="1"/>
<rect x="1034.5" y="597.5" width="7" height="46" fill="#aaff98" stroke="#141414" stroke-width="1"/>
<rect x="1041.5" y="598.5" width="7" height="45" fill="#a6ff9d" stroke="#141414" stroke-width="1"/>
<rect x="1048.5" y="600.5" width="7" height="43" fill="#a1ffa1" stroke="#141414" stroke-width="1"/>
<rect x="1055.5" y="602.5" width="6" height="41" fill="#9dffa5" stroke="#141414" stroke-width="1"/>
<rect x="1061.5" y="603.5" width="7" height="40" fill="#98ffa9" stroke="#141414" stroke-width="1"/>
<rect x="1068.5" y="605.5" width="7" height="38" fill="#94ffae" stroke="#141414" stroke-width="1"/>
<rect x="1075.5" y="607.5" width="7" height="36" fill="#8fffb2" stroke="#141414" stroke-width="1"/>
<rect x="1082.5" y="608.5" width="7" height="35" fill="#8cffb5" stroke="#141414" stroke-width="1"/>
<rect x="1089.5" y="610.5" width="7" height="33" fill="#8affb7" stroke="#141414" stroke-width="1"/>
<rect x="1096.5" y="612.5" width="6" height="31" fill="#87ffba" stroke="#141414" stroke-width="1"/>
<rect x="1102.5" y="613.5" width="7" height="30" fill="#85ffbc" stroke="#141414" stroke-width="1"/>
<rect x="1109.5" y="615.5" width="7" height="28" fill="#82ffbf" stroke="#141414" stroke-width="1"/>
<rect x="1116.5" y="617.5" width="7" height="26" fill="#80ffc1" stroke="#141414" stroke-width="1"/>
<rect x="1123.5" y="618.5" width="7" height="25" fill="#7dffc4" stroke="#141414" stroke-width="1"/>
<rect x="257" y="624" width="873" height="1" fill="#808080" opacity=".3"/>
<rect x="257" y="606" width="873" height="1" fill="#808080" opacity=".3"/>
<rect x="257" y="587" width="873" height="1" fill="#808080" opacity=".3"/>
<rect x="257" y="568" width="873" height="1" fill="#808080" opacity=".3"/>
<rect x="257" y="549" width="873" height="1" fill="#808080" opacity=".3"/>
<rect x="257" y="530" width="873" height="1" fill="#808080" opacity=".3"/>
<rect x="257" y="511" width="873" height="1" fill="#808080" opacity=".3"/>
</g>
<rect x="257" y="154" width="1" height="490" fill="#b02424"/>
<path d="M247.6 143.3 L267.6 143.3 L257.6 153.6 Z" fill="#c48c8c" stroke="#c23434" stroke-width="1"/>
<rect x="148" y="126" width="1" height="28" fill="#2e2e2e"/>
<text x="152.3" y="139" font-size="10.5" font-weight="bold" fill="#2a2a2a">8</text>
<text x="202.5" y="148" font-size="10" fill="#333" text-anchor="middle">8.3</text>
<rect x="257" y="126" width="1" height="28" fill="#2e2e2e"/>
<text x="261.3" y="139" font-size="10.5" font-weight="bold" fill="#2a2a2a">9</text>
<text x="311.5" y="148" font-size="10" fill="#333" text-anchor="middle">9.3</text>
<rect x="366" y="126" width="1" height="28" fill="#2e2e2e"/>
<text x="370.3" y="139" font-size="10.5" font-weight="bold" fill="#2a2a2a">10</text>
<text x="420.5" y="148" font-size="10" fill="#333" text-anchor="middle">10.3</text>
<rect x="475" y="126" width="1" height="28" fill="#2e2e2e"/>
<text x="479.4" y="139" font-size="10.5" font-weight="bold" fill="#2a2a2a">11</text>
<text x="529.6" y="148" font-size="10" fill="#333" text-anchor="middle">11.3</text>
<rect x="584" y="126" width="1" height="28" fill="#2e2e2e"/>
<text x="588.4" y="139" font-size="10.5" font-weight="bold" fill="#2a2a2a">12</text>
<text x="638.6" y="148" font-size="10" fill="#333" text-anchor="middle">12.3</text>
<rect x="693" y="126" width="1" height="28" fill="#2e2e2e"/>
<text x="697.5" y="139" font-size="10.5" font-weight="bold" fill="#2a2a2a">13</text>
<text x="747.7" y="148" font-size="10" fill="#333" text-anchor="middle">13.3</text>
<rect x="803" y="126" width="1" height="28" fill="#2e2e2e"/>
<text x="806.5" y="139" font-size="10.5" font-weight="bold" fill="#2a2a2a">14</text>
<text x="856.7" y="148" font-size="10" fill="#333" text-anchor="middle">14.3</text>
<rect x="912" y="126" width="1" height="28" fill="#2e2e2e"/>
<text x="915.5" y="139" font-size="10.5" font-weight="bold" fill="#2a2a2a">15</text>
<text x="965.7" y="148" font-size="10" fill="#333" text-anchor="middle">15.3</text>
<rect x="1021" y="126" width="1" height="28" fill="#2e2e2e"/>
<text x="1024.6" y="139" font-size="10.5" font-weight="bold" fill="#2a2a2a">16</text>
<text x="1074.8" y="148" font-size="10" fill="#333" text-anchor="middle">16.3</text>
<rect x="1130" y="126" width="1" height="28" fill="#2e2e2e"/>
<text x="1133.6" y="139" font-size="10.5" font-weight="bold" fill="#2a2a2a">17</text>
<text x="1183.8" y="148" font-size="10" fill="#333" text-anchor="middle">17.3</text>
<rect x="1239" y="126" width="1" height="28" fill="#2e2e2e"/>
<text x="1242.7" y="139" font-size="10.5" font-weight="bold" fill="#2a2a2a">18</text>
<text x="1292.9" y="148" font-size="10" fill="#333" text-anchor="middle">18.3</text>
<rect x="1323" y="89" width="18" height="65" fill="#333"/>
<clipPath id="pc"><rect x="10" y="154" width="127.5" height="335"/></clipPath>
<g clip-path="url(#pc)">
<rect x="10" y="154" width="127.5" height="334" fill="#cfcfcf"/>
<rect x="10" y="330.7" width="128" height="19" fill="#e4e4e4"/>
<rect x="10" y="335" width="72.5" height="10" fill="#f2f2f2"/>
<rect x="10" y="81.1" width="127.5" height="1.6" fill="#727272"/>
<rect x="82" y="61.1" width="55.5" height="1.6" fill="#727272"/>
<rect x="82" y="41.1" width="55.5" height="1.6" fill="#727272"/>
<rect x="10" y="21.1" width="127.5" height="1.6" fill="#727272"/>
<rect x="82" y="0.1" width="55.5" height="1.6" fill="#727272"/>
<rect x="82" y="-20.9" width="55.5" height="1.6" fill="#727272"/>
<rect x="82" y="-41.9" width="55.5" height="1.6" fill="#727272"/>
<rect x="10" y="57" width="72.5" height="16.5" rx="1.5" fill="#a9a9a9"/>
<rect x="9" y="57" width="73.5" height="14.4" rx="1.5" fill="#262626"/>
<rect x="9" y="57" width="73.5" height="8" rx="1.5" fill="#3f3f3f"/>
<rect x="9" y="62" width="73.5" height="3" fill="#3f3f3f"/>
<rect x="10" y="33" width="72.5" height="16.5" rx="1.5" fill="#a9a9a9"/>
<rect x="9" y="33" width="73.5" height="14.4" rx="1.5" fill="#262626"/>
<rect x="9" y="33" width="73.5" height="8" rx="1.5" fill="#3f3f3f"/>
<rect x="9" y="38" width="73.5" height="3" fill="#3f3f3f"/>
<rect x="10" y="-3" width="72.5" height="16.5" rx="1.5" fill="#a9a9a9"/>
<rect x="9" y="-3" width="73.5" height="14.4" rx="1.5" fill="#262626"/>
<rect x="9" y="-3" width="73.5" height="8" rx="1.5" fill="#3f3f3f"/>
<rect x="9" y="2" width="73.5" height="3" fill="#3f3f3f"/>
<rect x="10" y="-27" width="72.5" height="16.5" rx="1.5" fill="#a9a9a9"/>
<rect x="9" y="-27" width="73.5" height="14.4" rx="1.5" fill="#262626"/>
<rect x="9" y="-27" width="73.5" height="8" rx="1.5" fill="#3f3f3f"/>
<rect x="9" y="-22" width="73.5" height="3" fill="#3f3f3f"/>
<rect x="10" y="-51" width="72.5" height="16.5" rx="1.5" fill="#a9a9a9"/>
<rect x="9" y="-51" width="73.5" height="14.4" rx="1.5" fill="#262626"/>
<rect x="9" y="-51" width="73.5" height="8" rx="1.5" fill="#3f3f3f"/>
<rect x="9" y="-46" width="73.5" height="3" fill="#3f3f3f"/>
<rect x="10" y="225.1" width="127.5" height="1.6" fill="#727272"/>
<rect x="82" y="205.1" width="55.5" height="1.6" fill="#727272"/>
<rect x="82" y="185.1" width="55.5" height="1.6" fill="#727272"/>
<rect x="10" y="165.1" width="127.5" height="1.6" fill="#727272"/>
<rect x="82" y="144.1" width="55.5" height="1.6" fill="#727272"/>
<rect x="82" y="123.1" width="55.5" height="1.6" fill="#727272"/>
<rect x="82" y="102.1" width="55.5" height="1.6" fill="#727272"/>
<rect x="10" y="201" width="72.5" height="16.5" rx="1.5" fill="#a9a9a9"/>
<rect x="9" y="201" width="73.5" height="14.4" rx="1.5" fill="#262626"/>
<rect x="9" y="201" width="73.5" height="8" rx="1.5" fill="#3f3f3f"/>
<rect x="9" y="206" width="73.5" height="3" fill="#3f3f3f"/>
<rect x="10" y="177" width="72.5" height="16.5" rx="1.5" fill="#a9a9a9"/>
<rect x="9" y="177" width="73.5" height="14.4" rx="1.5" fill="#262626"/>
<rect x="9" y="177" width="73.5" height="8" rx="1.5" fill="#3f3f3f"/>
<rect x="9" y="182" width="73.5" height="3" fill="#3f3f3f"/>
<rect x="10" y="141" width="72.5" height="16.5" rx="1.5" fill="#a9a9a9"/>
<rect x="9" y="141" width="73.5" height="14.4" rx="1.5" fill="#262626"/>
<rect x="9" y="141" width="73.5" height="8" rx="1.5" fill="#3f3f3f"/>
<rect x="9" y="146" width="73.5" height="3" fill="#3f3f3f"/>
<rect x="10" y="117" width="72.5" height="16.5" rx="1.5" fill="#a9a9a9"/>
<rect x="9" y="117" width="73.5" height="14.4" rx="1.5" fill="#262626"/>
<rect x="9" y="117" width="73.5" height="8" rx="1.5" fill="#3f3f3f"/>
<rect x="9" y="122" width="73.5" height="3" fill="#3f3f3f"/>
<rect x="10" y="93" width="72.5" height="16.5" rx="1.5" fill="#a9a9a9"/>
<rect x="9" y="93" width="73.5" height="14.4" rx="1.5" fill="#262626"/>
<rect x="9" y="93" width="73.5" height="8" rx="1.5" fill="#3f3f3f"/>
<rect x="9" y="98" width="73.5" height="3" fill="#3f3f3f"/>
<rect x="10" y="369.1" width="127.5" height="1.6" fill="#727272"/>
<rect x="82" y="349.1" width="55.5" height="1.6" fill="#727272"/>
<rect x="82" y="329.1" width="55.5" height="1.6" fill="#727272"/>
<rect x="10" y="309.1" width="127.5" height="1.6" fill="#727272"/>
<rect x="82" y="288.1" width="55.5" height="1.6" fill="#727272"/>
<rect x="82" y="267.1" width="55.5" height="1.6" fill="#727272"/>
<rect x="82" y="246.1" width="55.5" height="1.6" fill="#727272"/>
<rect x="10" y="345" width="72.5" height="16.5" rx="1.5" fill="#a9a9a9"/>
<rect x="9" y="345" width="73.5" height="14.4" rx="1.5" fill="#262626"/>
<rect x="9" y="345" width="73.5" height="8" rx="1.5" fill="#3f3f3f"/>
<rect x="9" y="350" width="73.5" height="3" fill="#3f3f3f"/>
<rect x="10" y="321" width="72.5" height="16.5" rx="1.5" fill="#a9a9a9"/>
<rect x="9" y="321" width="73.5" height="14.4" rx="1.5" fill="#262626"/>
<rect x="9" y="321" width="73.5" height="8" rx="1.5" fill="#3f3f3f"/>
<rect x="9" y="326" width="73.5" height="3" fill="#3f3f3f"/>
<rect x="10" y="285" width="72.5" height="16.5" rx="1.5" fill="#a9a9a9"/>
<rect x="9" y="285" width="73.5" height="14.4" rx="1.5" fill="#262626"/>
<rect x="9" y="285" width="73.5" height="8" rx="1.5" fill="#3f3f3f"/>
<rect x="9" y="290" width="73.5" height="3" fill="#3f3f3f"/>
<rect x="10" y="261" width="72.5" height="16.5" rx="1.5" fill="#a9a9a9"/>
<rect x="9" y="261" width="73.5" height="14.4" rx="1.5" fill="#262626"/>
<rect x="9" y="261" width="73.5" height="8" rx="1.5" fill="#3f3f3f"/>
<rect x="9" y="266" width="73.5" height="3" fill="#3f3f3f"/>
<rect x="10" y="237" width="72.5" height="16.5" rx="1.5" fill="#a9a9a9"/>
<rect x="9" y="237" width="73.5" height="14.4" rx="1.5" fill="#262626"/>
<rect x="9" y="237" width="73.5" height="8" rx="1.5" fill="#3f3f3f"/>
<rect x="9" y="242" width="73.5" height="3" fill="#3f3f3f"/>
<rect x="10" y="513.1" width="127.5" height="1.6" fill="#727272"/>
<rect x="82" y="493.1" width="55.5" height="1.6" fill="#727272"/>
<rect x="82" y="473.1" width="55.5" height="1.6" fill="#727272"/>
<rect x="10" y="453.1" width="127.5" height="1.6" fill="#727272"/>
<rect x="82" y="432.1" width="55.5" height="1.6" fill="#727272"/>
<rect x="82" y="411.1" width="55.5" height="1.6" fill="#727272"/>
<rect x="82" y="390.1" width="55.5" height="1.6" fill="#727272"/>
<rect x="10" y="489" width="72.5" height="16.5" rx="1.5" fill="#a9a9a9"/>
<rect x="9" y="489" width="73.5" height="14.4" rx="1.5" fill="#262626"/>
<rect x="9" y="489" width="73.5" height="8" rx="1.5" fill="#3f3f3f"/>
<rect x="9" y="494" width="73.5" height="3" fill="#3f3f3f"/>
<rect x="10" y="465" width="72.5" height="16.5" rx="1.5" fill="#a9a9a9"/>
<rect x="9" y="465" width="73.5" height="14.4" rx="1.5" fill="#262626"/>
<rect x="9" y="465" width="73.5" height="8" rx="1.5" fill="#3f3f3f"/>
<rect x="9" y="470" width="73.5" height="3" fill="#3f3f3f"/>
<rect x="10" y="429" width="72.5" height="16.5" rx="1.5" fill="#a9a9a9"/>
<rect x="9" y="429" width="73.5" height="14.4" rx="1.5" fill="#262626"/>
<rect x="9" y="429" width="73.5" height="8" rx="1.5" fill="#3f3f3f"/>
<rect x="9" y="434" width="73.5" height="3" fill="#3f3f3f"/>
<rect x="10" y="405" width="72.5" height="16.5" rx="1.5" fill="#a9a9a9"/>
<rect x="9" y="405" width="73.5" height="14.4" rx="1.5" fill="#262626"/>
<rect x="9" y="405" width="73.5" height="8" rx="1.5" fill="#3f3f3f"/>
<rect x="9" y="410" width="73.5" height="3" fill="#3f3f3f"/>
<rect x="10" y="381" width="72.5" height="16.5" rx="1.5" fill="#a9a9a9"/>
<rect x="9" y="381" width="73.5" height="14.4" rx="1.5" fill="#262626"/>
<rect x="9" y="381" width="73.5" height="8" rx="1.5" fill="#3f3f3f"/>
<rect x="9" y="386" width="73.5" height="3" fill="#3f3f3f"/>
</g>
<rect x="10" y="487.6" width="128" height="1.4" fill="#666"/>
<text x="123" y="220.3" font-size="10.5" fill="#2e2e2e">C3</text>
<text x="123" y="364.3" font-size="10.5" fill="#2e2e2e">C2</text>
<rect x="137.3" y="89" width=".8" height="572" fill="#999"/><rect x="138" y="89" width="1" height="572" fill="#474747"/>
</svg>
<div id="title"></div><div id="tl-dark"></div>
<span class="t" style="left:611px;top:8.6px;font-size:14.6px;color:#262626;font-weight:normal;transform:scaleX(0.9870);text-shadow:0 0 4px rgba(255,255,255,.6);">MIDI take: Sylenth1</span>
<div id="frameL"></div><div id="frameR"></div><div id="frameR2"></div><div id="titleL"></div><div id="frameB"></div>
<div id="menu"></div>
<span class="t" style="left:15px;top:35.3px;font-size:12px;color:#585858;font-weight:normal;transform:scaleX(0.9460);">File</span>
<span class="t" style="left:46.9px;top:35.3px;font-size:12px;color:#585858;font-weight:normal;transform:scaleX(0.9787);">Show Channel</span>
<span class="t" style="left:136.9px;top:35.3px;font-size:12px;color:#585858;font-weight:normal;transform:scaleX(0.9501);">Remove CC</span>
<span class="t" style="left:213.3px;top:35.3px;font-size:12px;color:#585858;font-weight:normal;transform:scaleX(1.0082);">Options</span>
<span class="t" style="left:269px;top:35.3px;font-size:12px;color:#585858;font-weight:normal;transform:scaleX(0.9691);">View</span>
<span class="t" style="left:308.3px;top:35.3px;font-size:12px;color:#585858;font-weight:normal;transform:scaleX(0.9869);">Contents</span>
<span class="t" style="left:370px;top:35.3px;font-size:12px;color:#585858;font-weight:normal;transform:scaleX(0.9985);">Actions</span>
<div id="tb"></div>
<div class="info" style="left:17px"></div><div class="info" style="left:74px"></div>
<span class="t" style="left:24.7px;top:99px;font-size:11px;color:#c4c4c4;font-weight:normal;transform:scaleX(0.9618);">18.1.42</span>
<span class="t" style="left:83.7px;top:99px;font-size:11px;color:#c4c4c4;font-weight:normal;transform:scaleX(0.9561);">D2  50</span>
<div id="bot"></div>
<div class="tbtn" style="left:10px"></div>
<div class="tbtn on" style="left:34px"></div>
<div class="tbtn on" style="left:58px"></div>
<div class="tbtn" style="left:82px"></div>
<div class="tbtn" style="left:106px"></div>
<span class="t b" style="left:167.8px;top:669px;font-size:12px;color:#bdbdbd;font-weight:normal;transform:scaleX(0.8380);">Grid:</span>
<div class="combo" style="left:197.4px;width:53.4px;background:#fff"></div><div class="sel" style="left:200px;top:667px;width:31.2px;height:15px"></div>
<span class="t b" style="left:201.2px;top:668.3px;font-size:12px;color:#b8b8b8;font-weight:normal;transform:scaleX(0.8990);">1/16</span>
<svg class="t" style="left:236.5px;top:672px" width="10" height="7" viewBox="0 0 10 7"><path d="M1.2 1 L5 5.3 L8.8 1" fill="none" stroke="#333" stroke-width="1.5"/></svg>
<div class="combo" style="left:255.2px;width:59.4px"></div>
<span class="t b" style="left:259px;top:669px;font-size:12px;color:#1c1c1c;font-weight:normal;transform:scaleX(0.8308);">straight</span>
<svg class="t" style="left:300.5px;top:672px" width="10" height="7" viewBox="0 0 10 7"><path d="M1.2 1 L5 5.3 L8.8 1" fill="none" stroke="#333" stroke-width="1.5"/></svg>
<span class="t b" style="left:325.7px;top:669px;font-size:12px;color:#bdbdbd;font-weight:normal;transform:scaleX(0.8533);">Notes:</span>
<div class="combo" style="left:363px;width:53.9px;background:#fff"></div><div class="sel" style="left:365.7px;top:667px;width:31.1px;height:15px"></div>
<span class="t b" style="left:366.4px;top:668.3px;font-size:12px;color:#b8b8b8;font-weight:normal;transform:scaleX(0.8160);">Grid</span>
<svg class="t" style="left:402.5px;top:672px" width="10" height="7" viewBox="0 0 10 7"><path d="M1.2 1 L5 5.3 L8.8 1" fill="none" stroke="#333" stroke-width="1.5"/></svg>
<div style="position:absolute;left:431px;top:668px;width:13px;height:13px;background:#fff;border:1px solid #8a8a8a;border-right-color:#f0f0f0;border-bottom-color:#f0f0f0;box-shadow:inset 1px 1px 0 #555;box-sizing:border-box"></div>
<span class="t b" style="left:449px;top:669px;font-size:12px;color:#bdbdbd;font-weight:normal;transform:scaleX(0.8492);">Key snap</span>
<span class="t b" style="left:506px;top:669px;font-size:12px;color:#bdbdbd;font-weight:normal;transform:scaleX(0.8590);">Color:</span>
<div class="combo" style="left:541.5px;width:83px"></div>
<span class="t b" style="left:545.5px;top:669px;font-size:12px;color:#1c1c1c;font-weight:normal;transform:scaleX(0.8462);">Velocity</span>
<svg class="t" style="left:610.5px;top:672px" width="10" height="7" viewBox="0 0 10 7"><path d="M1.2 1 L5 5.3 L8.8 1" fill="none" stroke="#333" stroke-width="1.5"/></svg>
<div class="combo" style="left:1157.5px;width:88.5px"></div>
<span class="t b" style="left:1161.5px;top:669px;font-size:12px;color:#1c1c1c;font-weight:normal;transform:scaleX(0.8565);">Sylenth1</span>
<svg class="t" style="left:1232.5px;top:672px" width="10" height="7" viewBox="0 0 10 7"><path d="M1.2 1 L5 5.3 L8.8 1" fill="none" stroke="#333" stroke-width="1.5"/></svg>
<div class="combo" style="left:1250px;width:88.5px"></div>
<span class="t b" style="left:1254px;top:669px;font-size:12px;color:#1c1c1c;font-weight:normal;transform:scaleX(0.8653);">All channels</span>
<svg class="t" style="left:1324.5px;top:672px" width="10" height="7" viewBox="0 0 10 7"><path d="M1.2 1 L5 5.3 L8.8 1" fill="none" stroke="#333" stroke-width="1.5"/></svg>
<div class="combo" style="left:13px;top:624px;width:112px;height:19px;border-color:#f4f4f4;"></div>
<span class="t b" style="left:17.5px;top:627.7px;font-size:12px;color:#1c1c1c;font-weight:normal;transform:scaleX(0.8999);">•Velocity</span>
<svg class="t" style="left:110.5px;top:630.5px" width="10" height="7" viewBox="0 0 10 7"><path d="M1.2 1 L5 5.3 L8.8 1" fill="none" stroke="#333" stroke-width="1.5"/></svg>
<svg class="t" style="left:128.5px;top:634px" width="9" height="9" viewBox="0 0 9 9"><rect x=".5" y=".5" width="8" height="8" fill="#b4b4b4" stroke="#3c3c3c"/><path d="M2.5 4.5H6.5M4.5 2.5V6.5" stroke="#333" stroke-width="1"/></svg>
<svg width="1349" height="697" viewBox="0 0 1349 697" style="position:absolute;left:0;top:0;pointer-events:none">
<rect x="1323" y="154" width="17.3" height="490" fill="#bcc0c0"/>
<rect x="1326" y="376.7" width="11" height="83.3" rx="4.5" fill="#a3a3a3"/>
<rect x="1328" y="416.8" width="7" height="1.7" fill="#4c4c4c"/>
<circle cx="1331.3" cy="162" r="5.6" fill="#a2a2a2"/><path d="M1331.3 159.4 l3.3 4.6 h-6.6z" fill="#666"/>
<circle cx="1331.3" cy="597.5" r="5.6" fill="#a2a2a2"/><path d="M1331.3 600.1 l3.3 -4.6 h-6.6z" fill="#666"/>
<path d="M1327.5 614.5h8M1331.5 610.5v8" stroke="#3a3a3a" stroke-width="1.8"/>
<rect x="1327.5" y="624.2" width="8" height="1.6" fill="#1e1e1e"/>
<rect x="1327.5" y="634.7" width="8" height="1.8" fill="#686868"/>
<rect x="139" y="644" width="1184" height="17" fill="#bcc0c0"/>
<rect x="1323" y="644" width="18" height="17" fill="#333"/>
<circle cx="147.3" cy="652.4" r="5.6" fill="#a2a2a2"/><path d="M144.5 652.4 l4.6 -3.3 v6.6z" fill="#666"/>
<circle cx="1276.6" cy="652.4" r="5.6" fill="#a2a2a2"/><path d="M1279.4 652.4 l-4.6 -3.3 v6.6z" fill="#666"/>
<rect x="591" y="647" width="673" height="11" rx="4.5" fill="#a3a3a3"/>
<circle cx="597" cy="652.5" r="2.3" fill="#5a5a5a"/><circle cx="1258.4" cy="652.5" r="2.3" fill="#5a5a5a"/>
<rect x="925.6" y="649" width="1.5" height="7" fill="#5a5a5a"/>
<path d="M1289.5 652.5h8M1293.5 648.5v8" stroke="#3a3a3a" stroke-width="1.8"/>
<rect x="1303.3" y="648.5" width="1.6" height="8" fill="#1e1e1e"/>
<rect x="1310.5" y="651.6" width="8" height="1.8" fill="#686868"/>
<rect x="17.6" y="670.5" width="1.4" height="9" fill="#b4b8b8"/><path d="M19.6 675 L27 670.4 V679.6Z" fill="#b4b8b8"/>
<path d="M42.8 670.4 L51.2 674.9 L42.8 679.4Z" fill="#111"/>
<rect x="66.8" y="670.4" width="2.3" height="9" fill="#111"/><rect x="70.6" y="670.4" width="2.3" height="9" fill="#111"/>
<rect x="90.1" y="671" width="8" height="8" fill="#b4b8b8"/>
<path d="M121.6 675 L114.2 670.4 V679.6Z" fill="#b4b8b8"/><rect x="122.2" y="670.5" width="1.4" height="9" fill="#b4b8b8"/>
<circle cx="142" cy="674.9" r="11" fill="#7dbcbc"/>
<path d="M136.2 673.3 A6 6 0 0 1 147.5 672.3" fill="none" stroke="#fff" stroke-width="1.7"/><path d="M149.3 669.8 L148.6 674.8 L144.6 672.6Z" fill="#fff"/>
<path d="M147.8 676.5 A6 6 0 0 1 136.5 677.5" fill="none" stroke="#fff" stroke-width="1.7"/><path d="M134.7 680 L135.4 675 L139.4 677.2Z" fill="#fff"/>
</svg>
<svg width="1349" height="697" viewBox="0 0 1349 697" style="position:absolute;left:0;top:0" font-family="Liberation Sans, sans-serif">
<defs><pattern id="dots" width="4" height="6" patternUnits="userSpaceOnUse"><rect x="0.6" y="0.8" width="1" height="1" fill="#4590e2" opacity=".95"/><rect x="2.6" y="3.8" width="1" height="1" fill="#4590e2" opacity=".95"/></pattern><pattern id="gdots" width="3" height="4" patternUnits="userSpaceOnUse"><rect x="0.5" y="0.5" width="1" height="1" fill="#6ad08a" opacity=".7"/><rect x="2" y="2.5" width="1" height="1" fill="#6ad08a" opacity=".7"/></pattern></defs>
<rect x="10" y="54" width="30" height="30" fill="#222222"/><rect x="11" y="55" width="28" height="14" fill="#353535"/><rect x="11" y="69" width="28" height="14" fill="#272727"/>
<g transform="translate(10,54)"><rect x="7.7" y="7.7" width="14.5" height="14.4" fill="#dcdc62"/><rect x="7.7" y="21" width="14.5" height="1.1" fill="#58d040" opacity=".8"/><text x="14.95" y="19.6" font-size="13.5" font-weight="bold" fill="#25401c" text-anchor="middle">S</text></g>
<rect x="55" y="54" width="30" height="30" fill="#222222"/><rect x="56" y="55" width="28" height="14" fill="#353535"/><rect x="56" y="69" width="28" height="14" fill="#272727"/>
<rect x="85" y="54" width="30" height="30" fill="#222222"/><rect x="86" y="55" width="28" height="14" fill="#353535"/><rect x="86" y="69" width="28" height="14" fill="#272727"/>
<rect x="115" y="54" width="30" height="30" fill="#222222"/><rect x="116" y="55" width="28" height="14" fill="#353535"/><rect x="116" y="69" width="28" height="14" fill="#272727"/>
<rect x="145" y="54" width="30" height="30" fill="#222222"/><rect x="146" y="55" width="28" height="14" fill="#353535"/><rect x="146" y="69" width="28" height="14" fill="#272727"/>
<rect x="175" y="54" width="30" height="30" fill="#222222"/><rect x="176" y="55" width="28" height="14" fill="#353535"/><rect x="176" y="69" width="28" height="14" fill="#272727"/>
<rect x="205" y="54" width="30" height="30" fill="#222222"/><rect x="206" y="55" width="28" height="28" fill="#3a3a3a"/><rect x="206" y="56" width="28" height="1.3" fill="#565656"/><rect x="206" y="80.8" width="28" height="1.3" fill="#565656"/>
<rect x="235" y="54" width="30" height="30" fill="#222222"/><rect x="236" y="55" width="28" height="28" fill="#868c8a"/><rect x="236" y="55" width="28" height="28" fill="url(#dots)"/>
<rect x="265" y="54" width="30" height="30" fill="#222222"/><rect x="266" y="55" width="28" height="14" fill="#353535"/><rect x="266" y="69" width="28" height="14" fill="#272727"/>
<g transform="translate(55,54)"><path d="M17.8 7.3 L4.9 14.8 L17.8 22.9" fill="none" stroke="#dedada" stroke-width="1.6"/><path d="M10.7 14.8 L24.1 6.8 V23.4Z" fill="#dedada"/></g>
<g transform="translate(85,54)"><path d="M16.1 7.4V22.6 M12.4 7.6 C14.2 7.6 15.4 7.3 16.1 8 C16.8 7.3 18 7.6 19.8 7.6 M12.4 22.4 C14.2 22.4 15.4 22.7 16.1 22 C16.8 22.7 18 22.4 19.8 22.4" fill="none" stroke="#dedada" stroke-width="1.35"/></g>
<g transform="translate(115,54)"><path d="M12.2 7.3 L25.3 14.8 L12.2 22.9" fill="none" stroke="#dedada" stroke-width="1.6"/><path d="M19.2 14.8 L5.8 6.8 V23.4Z" fill="#dedada"/></g>
<g transform="translate(145,54)"><path d="M7.3 17.75 L14.85 5.1 L22.7 17.75" fill="none" stroke="#dedada" stroke-width="1.6"/><path d="M14.85 10.7 L6.8 23.85 H23.1Z" fill="#dedada"/></g>
<g transform="translate(175,54)"><path d="M7.3 11.9 L14.95 24.5 L22.6 11.9" fill="none" stroke="#dedada" stroke-width="1.6"/><path d="M14.95 18.9 L6.8 5.8 H23.1Z" fill="#dedada"/></g>
<g transform="translate(205,54)"><rect x="3.9" y="4.85" width="9.2" height="4.1" fill="#ebe7e7"/><rect x="14.1" y="4.85" width="12" height="4.1" fill="#6e6e6e"/><rect x="3.9" y="9.95" width="9.2" height="4.1" fill="#ebe7e7"/><rect x="14.1" y="9.95" width="12" height="4.1" fill="#6e6e6e"/><rect x="3.9" y="15.05" width="9.2" height="4.1" fill="#ebe7e7"/><rect x="14.1" y="15.05" width="12" height="4.1" fill="#6e6e6e"/><rect x="3.9" y="20.05" width="9.2" height="4.1" fill="#ebe7e7"/><rect x="14.1" y="20.05" width="12" height="4.1" fill="#6e6e6e"/></g>
<g transform="translate(235,54)"><path d="M9.5 12 C13.5 12 16.6 15 16.6 19.2 C16.6 22.5 15 25.6 13.2 26 L5.4 26 C3.6 24.8 2.6 22.4 2.6 19.4 C2.6 15 5.5 12 9.5 12Z" fill="#e0dcdc"/><circle cx="9" cy="14.6" r="1.15" fill="#646464"/><circle cx="5.3" cy="17" r="1.15" fill="#646464"/><circle cx="12.7" cy="17" r="1.15" fill="#646464"/><circle cx="4.3" cy="21" r="1.15" fill="#646464"/><circle cx="13.4" cy="21" r="1.15" fill="#646464"/><circle cx="8.8" cy="25.2" r="1.15" fill="#646464"/><path d="M18.6 10.6 C21 9.6 24.4 11 25 14 C25.6 17.5 24.6 22 22.6 24.4 C21.4 25.6 19.8 25 19.6 23 C19.4 20.5 20.3 18.6 19.4 16 C18.8 14.2 17.6 11.4 18.6 10.6Z" fill="#1fcb45" stroke="#7ee08e" stroke-width=".9"/><ellipse cx="18.3" cy="6.8" rx="1.7" ry="1.5" fill="#2fd050"/><circle cx="21.6" cy="6.6" r="0.9" fill="#5fe070"/><circle cx="23.6" cy="8" r="0.85" fill="#5fe070"/><circle cx="25.3" cy="10" r="0.8" fill="#5fe070"/></g>
<g transform="translate(265,54)"><path d="M2.9 10.6 L6.2 8 V13.2Z" fill="#dedada"/><path d="M27.2 10.6 L23.9 8 V13.2Z" fill="#dedada"/><path d="M2.9 21.4 L6.2 18.8 V24Z" fill="#dedada"/><path d="M27.2 21.4 L23.9 18.8 V24Z" fill="#dedada"/><path d="M10 14 L14.9 6.9 L20 11.9" fill="none" stroke="#dedada" stroke-width="1.1"/><rect x="8.6" y="12.6" width="2.8" height="2.8" fill="#222" stroke="#dedada" stroke-width="1.1"/><rect x="13.5" y="5.5" width="2.8" height="2.8" fill="#222" stroke="#dedada" stroke-width="1.1"/><rect x="18.6" y="10.5" width="2.8" height="2.8" fill="#222" stroke="#dedada" stroke-width="1.1"/><rect x="8.3" y="18.3" width="13.4" height="6.5" fill="#3d7d92" stroke="#9cc4c4" stroke-width=".8"/></g>
<rect x="310" y="54" width="30" height="30" fill="#222222"/><rect x="311" y="55" width="28" height="28" fill="#868c8a"/><rect x="311" y="55" width="28" height="28" fill="url(#gdots)"/>
<g transform="translate(310,54)"><path d="M5.6 5.2V24.6" stroke="#34e468" stroke-width="1.2" stroke-dasharray="2.2 1.1"/><path d="M8.3 8.4 H15 A6.65 6.65 0 0 1 15 21.7 H8.3" fill="none" stroke="#6aec94" stroke-width="2.4"/><path d="M8.6 8.4 H15 A6.65 6.65 0 0 1 15 21.7 H8.6" fill="none" stroke="#18d84c" stroke-width="1.2"/></g>
<rect x="355" y="54" width="30" height="30" fill="#222222"/><rect x="356" y="55" width="28" height="14" fill="#353535"/><rect x="356" y="69" width="28" height="14" fill="#272727"/>
<rect x="385" y="54" width="30" height="30" fill="#222222"/><rect x="386" y="55" width="28" height="14" fill="#353535"/><rect x="386" y="69" width="28" height="14" fill="#272727"/>
<rect x="415" y="54" width="30" height="30" fill="#222222"/><rect x="416" y="55" width="28" height="14" fill="#353535"/><rect x="416" y="69" width="28" height="14" fill="#272727"/>
<rect x="445" y="54" width="30" height="30" fill="#222222"/><rect x="446" y="55" width="28" height="14" fill="#353535"/><rect x="446" y="69" width="28" height="14" fill="#272727"/>
<rect x="475" y="54" width="30" height="30" fill="#222222"/><rect x="476" y="55" width="28" height="14" fill="#353535"/><rect x="476" y="69" width="28" height="14" fill="#272727"/>
<rect x="505" y="54" width="30" height="30" fill="#222222"/><rect x="506" y="55" width="28" height="14" fill="#353535"/><rect x="506" y="69" width="28" height="14" fill="#272727"/>
<rect x="535" y="54" width="30" height="30" fill="#222222"/><rect x="536" y="55" width="28" height="14" fill="#353535"/><rect x="536" y="69" width="28" height="14" fill="#272727"/>
<rect x="595" y="54" width="30" height="30" fill="#222222"/><rect x="596" y="55" width="28" height="14" fill="#353535"/><rect x="596" y="69" width="28" height="14" fill="#272727"/>
<rect x="625" y="54" width="30" height="30" fill="#222222"/><rect x="626" y="55" width="28" height="14" fill="#353535"/><rect x="626" y="69" width="28" height="14" fill="#272727"/>
<rect x="655" y="54" width="30" height="30" fill="#222222"/><rect x="656" y="55" width="28" height="14" fill="#353535"/><rect x="656" y="69" width="28" height="14" fill="#272727"/>
<rect x="565" y="54" width="30" height="30" fill="#222222"/><rect x="566" y="55" width="28" height="28" fill="#868c8a"/><rect x="566" y="55" width="28" height="28" fill="url(#dots)"/>
<g transform="translate(355,54)"><circle cx="20" cy="9.95" r="6.1" fill="#e0dcdc"/><rect x="19.25" y="5.15" width="1.5" height="1.5" fill="#111"/><rect x="16.25" y="7.25" width="1.5" height="1.5" fill="#111"/><rect x="22.25" y="7.25" width="1.5" height="1.5" fill="#111"/><rect x="15.25" y="10.25" width="1.5" height="1.5" fill="#111"/><rect x="23.25" y="10.25" width="1.5" height="1.5" fill="#111"/><rect x="19.25" y="13.3" width="1.5" height="3" fill="#222"/><path d="M5.8 24.1 L11 17 L16.1 21.9" fill="none" stroke="#dedada" stroke-width="1.1"/><rect x="4.4" y="22.7" width="2.8" height="2.8" fill="#222" stroke="#dedada" stroke-width="1.1"/><rect x="9.6" y="15.6" width="2.8" height="2.8" fill="#222" stroke="#dedada" stroke-width="1.1"/><rect x="14.7" y="20.5" width="2.8" height="2.8" fill="#222" stroke="#dedada" stroke-width="1.1"/></g>
<g transform="translate(385,54)"><rect x="4.85" y="10.2" width="9.3" height="5.9" fill="#e0dcdc"/><path d="M6.6 10.4 V8 A2.9 2.9 0 0 1 12.4 8 V10.4" fill="none" stroke="#e0dcdc" stroke-width="1.5"/><path d="M13.9 22.9 L19 15.8 L24.1 20.9" fill="none" stroke="#dedada" stroke-width="1.1"/><rect x="12.5" y="21.5" width="2.8" height="2.8" fill="#222" stroke="#dedada" stroke-width="1.1"/><rect x="17.6" y="14.4" width="2.8" height="2.8" fill="#222" stroke="#dedada" stroke-width="1.1"/><rect x="22.7" y="19.5" width="2.8" height="2.8" fill="#222" stroke="#dedada" stroke-width="1.1"/></g>
<g transform="translate(415,54)"><text x="6.1" y="12.6" font-size="11.6" font-weight="bold" fill="#e6e2e2" stroke="#e6e2e2" stroke-width=".3" textLength="17.3" lengthAdjust="spacingAndGlyphs">ENV</text><text x="6.3" y="25.3" font-size="11.9" font-weight="bold" fill="#1fcc44" stroke="#1fcc44" stroke-width=".4" textLength="17.6" lengthAdjust="spacingAndGlyphs">LFO</text></g>
<g transform="translate(445,54)"><path d="M4.85 4.8 L25.1 15.3" stroke="#dcdcdc" stroke-width="1.3" stroke-dasharray="2 1.5"/><rect x="5.2" y="11.1" width="4.7" height="13.7" fill="#10cc3c" stroke="#62e884" stroke-width=".8"/><rect x="12.2" y="15.1" width="4.5" height="9.7" fill="#10cc3c" stroke="#62e884" stroke-width=".8"/><rect x="19.1" y="19.2" width="4.7" height="5.6" fill="#10cc3c" stroke="#62e884" stroke-width=".8"/></g>
<g transform="translate(475,54)"><path d="M14.6 13.4 L7.05 24.1 M17.8 14 L22.9 19" stroke="#c4c4c4" stroke-width="1.1"/><path d="M16 7.8V4.5M16 16V19.3M11.8 11.6H8.6M20.2 11.6H23.4" stroke="#dedada" stroke-width="1.2"/><path d="M16 2.9l1.9 2.6h-3.8zM16 20.9l1.9 -2.6h-3.8zM6.8 11.6l2.6 -1.9v3.8zM25.1 11.6l-2.6 -1.9v3.8z" fill="#dedada"/><circle cx="16" cy="11.9" r="2.75" fill="#22cc48" stroke="#78e0a8" stroke-width=".7"/><rect x="5.65" y="22.7" width="2.8" height="2.8" fill="#222" stroke="#dedada" stroke-width="1.1"/><rect x="21.5" y="17.6" width="2.8" height="2.8" fill="#222" stroke="#dedada" stroke-width="1.1"/></g>
<g transform="translate(505,54)"><ellipse cx="14.85" cy="19" rx="10.4" ry="5.55" fill="none" stroke="#d8d4d4" stroke-width="1.2"/><path d="M14.1 15.4 V19 L18.3 21.2" fill="none" stroke="#d0d0d0" stroke-width="1.1"/><path d="M14.85 14v1.2M14.85 24v-1.2M6 19h1.4M23.7 19h-1.4M9 15.6l1 .8M20.7 15.6l-1 .8M9 22.4l1 -.8M20.7 22.4l-1 -.8" stroke="#777" stroke-width=".8"/><path d="M16.3 5.1V11.7" stroke="#a0a0a0" stroke-width="1"/><path d="M18 7.2H22.2V5L26.1 8.5L22.2 12V9.8H18Z" fill="#22dd50"/></g>
<g transform="translate(535,54)"><path d="M6.6 19 L14.6 19 L24.6 9.4 A2.9 2.9 0 0 0 20.4 5.4 Z" fill="#e0dcdc"/><circle cx="22.6" cy="7.4" r="1.05" fill="#3a3a3a"/><path d="M6.7 20.1H13.5L6.7 25.8Z" fill="#e85a30"/></g>
<g transform="translate(565,54)"><path d="M6.3 22.6 L23.9 8" stroke="#e6e4e4" stroke-width="1.9" stroke-linecap="round"/></g>
<g transform="translate(595,54)"><path d="M6.1 23.1 H9.5 C15 23.1 13.2 8 19.5 8 H23.9" fill="none" stroke="#e4e0e0" stroke-width="1.9"/></g>
<g transform="translate(625,54)"><path d="M14.5 3.1V27" stroke="#8c96a0" stroke-width="1.2"/><path d="M14.5 3.1V27" stroke="#3a8ae0" stroke-width="1.2" stroke-dasharray="1.5 2"/><path d="M9 15.3 L14.5 10.2 V20.4Z" fill="#2a88e0"/><path d="M20 15.3 L14.5 10.2 V20.4Z" fill="#dc4c30"/><rect x="3.7" y="5.1" width="1.4" height="20" fill="#58d878"/><path d="M3.7 5.1H9.2L4.6 9.5Z" fill="#58d878"/><rect x="24.7" y="5.1" width="1.4" height="20" fill="#58d878"/><path d="M26.1 5.1H20.6L25.2 9.5Z" fill="#58d878"/></g>
<g transform="translate(655,54)"><path d="M14.5 3.1V27" stroke="#8c96a0" stroke-width="1.2"/><path d="M14.5 3.1V27" stroke="#3a8ae0" stroke-width="1.2" stroke-dasharray="1.5 2"/><path d="M9 15.3 L14.5 10.2 V20.4Z" fill="#2a88e0"/><path d="M20 15.3 L14.5 10.2 V20.4Z" fill="#dc4c30"/><rect x="3.7" y="5.1" width="1.4" height="20" fill="#e8623c"/><path d="M3.7 5.1H9.2L4.6 9.5Z" fill="#e8623c"/><rect x="24.7" y="5.1" width="1.4" height="20" fill="#e8623c"/><path d="M26.1 5.1H20.6L25.2 9.5Z" fill="#e8623c"/></g>
<rect x="700" y="54" width="30" height="30" fill="#222222"/><rect x="701" y="55" width="28" height="14" fill="#353535"/><rect x="701" y="69" width="28" height="14" fill="#272727"/>
<rect x="730" y="54" width="30" height="30" fill="#222222"/><rect x="731" y="55" width="28" height="14" fill="#353535"/><rect x="731" y="69" width="28" height="14" fill="#272727"/>
<rect x="760" y="54" width="30" height="30" fill="#222222"/><rect x="761" y="55" width="28" height="14" fill="#353535"/><rect x="761" y="69" width="28" height="14" fill="#272727"/>
<g transform="translate(700,54)"><text x="6.8" y="18" font-size="10" fill="#b8b8b8" textLength="17.5" lengthAdjust="spacingAndGlyphs">100</text></g>
<g transform="translate(730,54)"><rect x="4.95" y="4.95" width="1.1" height="1.1" fill="#b4b4b4"/><rect x="4.95" y="6.95" width="1.1" height="1.1" fill="#b4b4b4"/><rect x="4.95" y="8.95" width="1.1" height="1.1" fill="#b4b4b4"/><rect x="4.95" y="19.95" width="1.1" height="1.1" fill="#b4b4b4"/><rect x="4.95" y="21.95" width="1.1" height="1.1" fill="#b4b4b4"/><rect x="4.95" y="23.95" width="1.1" height="1.1" fill="#b4b4b4"/><rect x="11.95" y="4.95" width="1.1" height="1.1" fill="#b4b4b4"/><rect x="11.95" y="6.95" width="1.1" height="1.1" fill="#b4b4b4"/><rect x="11.95" y="8.95" width="1.1" height="1.1" fill="#b4b4b4"/><rect x="11.95" y="19.95" width="1.1" height="1.1" fill="#b4b4b4"/><rect x="11.95" y="21.95" width="1.1" height="1.1" fill="#b4b4b4"/><rect x="11.95" y="23.95" width="1.1" height="1.1" fill="#b4b4b4"/><rect x="18.95" y="4.95" width="1.1" height="1.1" fill="#b4b4b4"/><rect x="18.95" y="6.95" width="1.1" height="1.1" fill="#b4b4b4"/><rect x="18.95" y="8.95" width="1.1" height="1.1" fill="#b4b4b4"/><rect x="18.95" y="19.95" width="1.1" height="1.1" fill="#b4b4b4"/><rect x="18.95" y="21.95" width="1.1" height="1.1" fill="#b4b4b4"/><rect x="18.95" y="23.95" width="1.1" height="1.1" fill="#b4b4b4"/><rect x="4.9" y="11.15" width="6.1" height="1.7" fill="#b6b6b6"/><rect x="11.9" y="11.15" width="6.1" height="1.7" fill="#b6b6b6"/><rect x="18.9" y="11.15" width="6.3" height="1.7" fill="#b6b6b6"/><rect x="4.9" y="14.15" width="6.1" height="1.7" fill="#b6b6b6"/><rect x="11.9" y="14.15" width="6.1" height="1.7" fill="#b6b6b6"/><rect x="18.9" y="14.15" width="6.3" height="1.7" fill="#b6b6b6"/><rect x="4.9" y="17.15" width="6.1" height="1.7" fill="#b6b6b6"/><rect x="11.9" y="17.15" width="6.1" height="1.7" fill="#b6b6b6"/><rect x="18.9" y="17.15" width="6.3" height="1.7" fill="#b6b6b6"/></g>
<g transform="translate(760,54)"><rect x="5.95" y="4.95" width="1.1" height="1.1" fill="#b4b4b4"/><rect x="5.95" y="6.95" width="1.1" height="1.1" fill="#b4b4b4"/><rect x="5.95" y="8.95" width="1.1" height="1.1" fill="#b4b4b4"/><rect x="5.95" y="19.95" width="1.1" height="1.1" fill="#b4b4b4"/><rect x="5.95" y="21.95" width="1.1" height="1.1" fill="#b4b4b4"/><rect x="5.95" y="23.95" width="1.1" height="1.1" fill="#b4b4b4"/><rect x="12.95" y="4.95" width="1.1" height="1.1" fill="#b4b4b4"/><rect x="12.95" y="6.95" width="1.1" height="1.1" fill="#b4b4b4"/><rect x="12.95" y="8.95" width="1.1" height="1.1" fill="#b4b4b4"/><rect x="12.95" y="19.95" width="1.1" height="1.1" fill="#b4b4b4"/><rect x="12.95" y="21.95" width="1.1" height="1.1" fill="#b4b4b4"/><rect x="12.95" y="23.95" width="1.1" height="1.1" fill="#b4b4b4"/><rect x="19.95" y="4.95" width="1.1" height="1.1" fill="#b4b4b4"/><rect x="19.95" y="6.95" width="1.1" height="1.1" fill="#b4b4b4"/><rect x="19.95" y="8.95" width="1.1" height="1.1" fill="#b4b4b4"/><rect x="19.95" y="19.95" width="1.1" height="1.1" fill="#b4b4b4"/><rect x="19.95" y="21.95" width="1.1" height="1.1" fill="#b4b4b4"/><rect x="19.95" y="23.95" width="1.1" height="1.1" fill="#b4b4b4"/><rect x="3.9" y="11.15" width="5.3" height="1.7" fill="#b6b6b6"/><rect x="11" y="11.15" width="5" height="1.7" fill="#b6b6b6"/><rect x="17.8" y="11.15" width="5.3" height="1.7" fill="#b6b6b6"/><rect x="5.8" y="14.15" width="5.4" height="1.7" fill="#b6b6b6"/><rect x="12.9" y="14.15" width="5.1" height="1.7" fill="#b6b6b6"/><rect x="20.7" y="14.15" width="5.3" height="1.7" fill="#b6b6b6"/><rect x="3.9" y="17.15" width="5.3" height="1.7" fill="#b6b6b6"/><rect x="11.9" y="17.15" width="5.1" height="1.7" fill="#b6b6b6"/><rect x="19.7" y="17.15" width="5.4" height="1.7" fill="#b6b6b6"/></g>
<rect x="805" y="54" width="30" height="30" fill="#222222"/><rect x="806" y="55" width="28" height="14" fill="#353535"/><rect x="806" y="69" width="28" height="14" fill="#272727"/>
<rect x="835" y="54" width="30" height="30" fill="#222222"/><rect x="836" y="55" width="28" height="14" fill="#353535"/><rect x="836" y="69" width="28" height="14" fill="#272727"/>
<g transform="translate(805,54)"><rect x="6.3" y="5.4" width="17.5" height="4.3" fill="#10cc3c" stroke="#72e892" stroke-width=".8"/><path d="M12.6 24.8 C11 22.5 9.6 20.6 8.9 19 C8.4 17.6 9.8 17 10.8 18.2 L12.3 20 L10.9 13.6 C10.6 12.2 12.3 11.8 12.8 13.2 L14.2 17.4 L14.2 12 C14.2 10.5 16.2 10.5 16.3 12 L16.6 17.2 L17.6 12.9 C18 11.5 19.8 11.9 19.6 13.3 L19 17.8 L20.4 15.6 C21.2 14.4 22.6 15.1 22 16.5 C21 19 20 21.5 19.3 24.8 Z" fill="#dcdcdc"/></g>
<g transform="translate(835,54)"><text x="15" y="20.4" font-family="Liberation Serif, serif" font-weight="bold" font-size="22.6" fill="#e0502c" text-anchor="middle">Q</text></g>
<rect x="880" y="54" width="30" height="30" fill="#222222"/><rect x="881" y="55" width="28" height="14" fill="#353535"/><rect x="881" y="69" width="28" height="14" fill="#272727"/>
<rect x="940" y="54" width="30" height="30" fill="#222222"/><rect x="941" y="55" width="28" height="14" fill="#353535"/><rect x="941" y="69" width="28" height="14" fill="#272727"/>
<rect x="970" y="54" width="30" height="30" fill="#222222"/><rect x="971" y="55" width="28" height="14" fill="#353535"/><rect x="971" y="69" width="28" height="14" fill="#272727"/>
<rect x="1000" y="54" width="30" height="30" fill="#222222"/><rect x="1001" y="55" width="28" height="14" fill="#353535"/><rect x="1001" y="69" width="28" height="14" fill="#272727"/>
<rect x="1030" y="54" width="30" height="30" fill="#222222"/><rect x="1031" y="55" width="28" height="14" fill="#353535"/><rect x="1031" y="69" width="28" height="14" fill="#272727"/>
<rect x="1060" y="54" width="30" height="30" fill="#222222"/><rect x="1061" y="55" width="28" height="14" fill="#353535"/><rect x="1061" y="69" width="28" height="14" fill="#272727"/>
<rect x="1090" y="54" width="30" height="30" fill="#222222"/><rect x="1091" y="55" width="28" height="14" fill="#353535"/><rect x="1091" y="69" width="28" height="14" fill="#272727"/>
<rect x="1120" y="54" width="30" height="30" fill="#222222"/><rect x="1121" y="55" width="28" height="14" fill="#353535"/><rect x="1121" y="69" width="28" height="14" fill="#272727"/>
<rect x="910" y="54" width="30" height="30" fill="#222222"/><rect x="911" y="55" width="28" height="28" fill="#868c8a"/><rect x="911" y="55" width="28" height="28" fill="url(#dots)"/>
<g transform="translate(880,54)"><ellipse cx="13" cy="21.2" rx="3.05" ry="1.95" transform="rotate(-22 13 21.2)" fill="#dedada"/><rect x="14.8" y="6" width="1.2" height="15.2" fill="#dedada"/><path d="M15.4 6.4 L19.6 11.6" stroke="#dedada" stroke-width="1.15"/><path d="M15.4 9.4 L19.6 14.6" stroke="#dedada" stroke-width="1.15"/><path d="M15.4 12.4 L19.6 17.6" stroke="#dedada" stroke-width="1.15"/><path d="M19.5 11.5 V20" stroke="#dedada" stroke-width=".8"/></g>
<g transform="translate(910,54)"><ellipse cx="13" cy="21.2" rx="3.05" ry="1.95" transform="rotate(-22 13 21.2)" fill="#dedada"/><rect x="15" y="6" width="1.2" height="15.2" fill="#dedada"/><path d="M15.6 6.4 L19.8 11.6" stroke="#dedada" stroke-width="1.15"/><path d="M15.6 9.4 L19.8 14.6" stroke="#dedada" stroke-width="1.15"/><path d="M19.7 11.5 V20" stroke="#dedada" stroke-width=".8"/></g>
<g transform="translate(940,54)"><ellipse cx="12" cy="21.2" rx="3.05" ry="1.95" transform="rotate(-22 12 21.2)" fill="#dedada"/><rect x="13.9" y="6" width="1.2" height="15.2" fill="#dedada"/><path d="M14.5 6 C15 9.5 19.4 11 18.6 16.5 C18.5 17.8 18.2 18.6 17.8 19.4 C18.6 15 16.8 12.6 14.5 11.6Z" fill="#dedada"/></g>
<g transform="translate(970,54)"><ellipse cx="13.9" cy="21.2" rx="3.05" ry="1.95" transform="rotate(-22 13.9 21.2)" fill="#dedada"/><rect x="15.9" y="6" width="1.2" height="15.2" fill="#dedada"/></g>
<g transform="translate(1000,54)"><ellipse cx="14" cy="21.2" rx="2.6" ry="1.6" transform="rotate(-25 14 21.2)" fill="none" stroke="#dedada" stroke-width="1.2"/><rect x="16" y="6" width="1.2" height="15.2" fill="#dedada"/></g>
<g transform="translate(1030,54)"><ellipse cx="14.5" cy="21.05" rx="3.7" ry="2.15" fill="#dedada"/><ellipse cx="14.5" cy="21.05" rx="1.35" ry="1.25" fill="#262626"/></g>
<g transform="translate(1060,54)"><path d="M5.3 17.1 V13.3 H10.6 M19.1 13.3 H24.5 V17.1" fill="none" stroke="#e2e2e2" stroke-width="1.3"/><text x="12" y="17.1" font-size="9.5" font-weight="bold" font-style="italic" fill="#e6e6e6" textLength="5.8" lengthAdjust="spacingAndGlyphs">3</text></g>
<g transform="translate(1090,54)"><ellipse cx="12.7" cy="21.2" rx="3.05" ry="1.95" transform="rotate(-22 12.7 21.2)" fill="#737373"/><rect x="15" y="6" width="1.2" height="15.2" fill="#737373"/><rect x="18" y="21" width="2.2" height="2.2" fill="#e8e8e8"/></g>
<g transform="translate(1120,54)"><path d="M7.2 8.6H23.9M7.5 6.2V9.9M13.4 6.2V9.9M18.5 6.2V9.9M23.7 6.2V9.9" stroke="#9a9a9a" stroke-width="1"/><rect x="7.2" y="11.3" width="10.9" height="4.6" fill="#a4c4e4"/><rect x="19.15" y="11.3" width="4.75" height="4.6" fill="#e07850"/><path d="M7.9 20.5H12.9M10.4 18V23" stroke="#f0f0f0" stroke-width="1.4"/><path d="M16.1 18.4L19.5 20.6L16.1 22.8ZM19.9 18.4L23.3 20.6L19.9 22.8Z" fill="#f0f0f0"/></g>
<g transform="translate(9.8,6.85)"><path d="M1.4 4.3 C3.5 2 8 2 11.2 4.5 L9.7 9.3 L9 16.5 L7 16.2 L6.8 9.3 Z" fill="#f6f6f6"/><path d="M1.3 3.9 C3 0.6 6 -0.2 8.4 0 C12.5 0.2 15.8 3 16.2 6.4 C16.3 7 16.1 7.5 15.8 7.9 L14.9 6 C13.5 3.4 11.5 1.9 9.1 1.7 C6.5 1.5 4.3 2 2.8 2.9 Z" fill="#1f7ccc"/><path d="M0.4 5.6 C0.9 4.9 1.6 4.7 2.4 4.85 C4.6 5.6 6.2 7.5 6.9 9.3 C7.7 11 8.1 12 8 12.3 C8.1 13.8 7.8 15 7.26 16 L6.5 16.4 C3 14.5 1.2 12 0.92 10.08 C0.4 8.5 0.2 6.8 0.4 5.6Z" fill="#3fd03f"/><path d="M6.5 4.48 C8 4 9.6 4.1 11 4.5 C13 5.2 14.4 6.2 15.1 7.46 C15 9 14.5 10.5 13.6 11.94 C12.5 14 11 15.6 9.1 16.8 L8.75 15.3 C9.6 13.4 9.9 11.4 9.5 9.33 C9 7.3 8 5.6 6.5 4.48Z" fill="#c0603c"/></g><rect x="1244.5" y="1.5" width="96.5" height="18.8" fill="#a8a8a8" stroke="#6a6a6a" stroke-width="1"/><path d="M1270.8 1.5V20.3M1296.8 1.5V20.3" stroke="#6a6a6a" stroke-width="1"/><rect x="1252.8" y="11.8" width="10.8" height="3.4" fill="#c2c2c2" stroke="#9a9a9a" stroke-width=".6"/><rect x="1279.2" y="6.5" width="11.6" height="9" fill="#fff" stroke="#3a3a3a" stroke-width="1"/><rect x="1282" y="9.2" width="6" height="3.6" fill="#a8a8a8" stroke="#3a3a3a" stroke-width="1"/><path d="M1315 6.3 L1325 15.7 M1325 6.3 L1315 15.7" stroke="#333" stroke-width="4.6"/><path d="M1315.6 6.9 L1324.4 15.1 M1324.4 6.9 L1315.6 15.1" stroke="#fff" stroke-width="2.4"/><g transform="translate(1224,3)"><path d="M3.5 0.8H10.5V2.6H9.3V7.2C11 7.8 12.2 8.8 12.4 10.4H8V15.6L7 16.6L6 15.6V10.4H1.6C1.8 8.8 3 7.8 4.7 7.2V2.6H3.5Z" fill="#fff" stroke="#3a3a3a" stroke-width=".9"/></g><path d="M703.5 27.5 V44.5 L707.4 40.8 L710 47 L712.4 46 L709.8 39.9 H715.2Z" fill="#fff" stroke="#111" stroke-width="1"/>
</svg>
</body></html>
